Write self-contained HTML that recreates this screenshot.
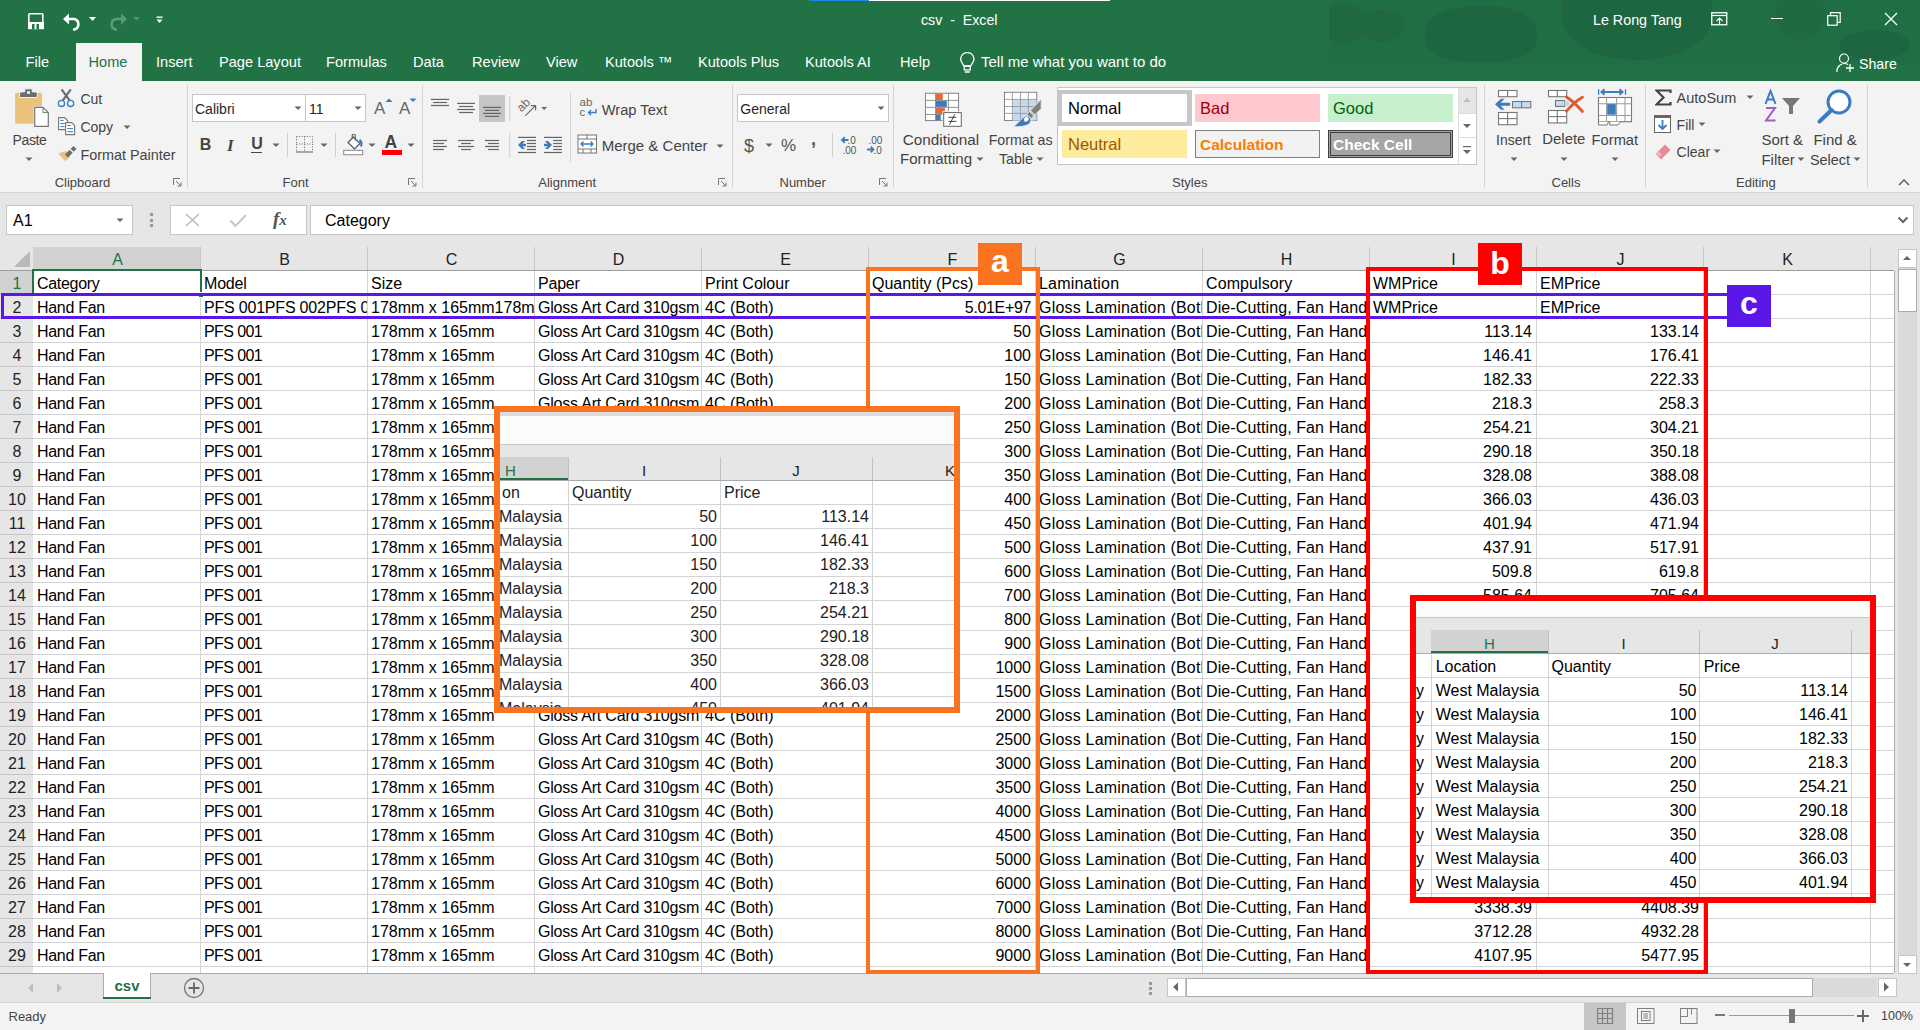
<!DOCTYPE html><html><head><meta charset="utf-8"><style>
html,body{margin:0;padding:0;width:1920px;height:1030px;overflow:hidden;background:#fff;font-family:'Liberation Sans', sans-serif;}
div,svg{box-sizing:border-box;}
.c{position:absolute;overflow:hidden;white-space:nowrap;font-size:16px;line-height:1;color:#000;}
</style></head><body>
<div style="position:absolute;left:0px;top:0px;width:1920px;height:81px;background:#217346;"></div>
<div style="position:absolute;left:1329px;top:0;width:591px;height:65px;overflow:hidden;background:#206f44;"><div style="position:absolute;left:-9px;top:3px;width:46px;height:40px;border-radius:50%;background:#1f6840;"></div><div style="position:absolute;left:28px;top:10px;width:48px;height:32px;border-radius:50%;background:#1f6840;"></div><div style="position:absolute;left:96px;top:6px;width:112px;height:56px;border-radius:45% 45% 40% 40%;background:#1e663f;"></div><div style="position:absolute;left:233px;top:-24px;width:150px;height:84px;border-radius:0 0 50% 50%;background:#1e663f;"></div><div style="position:absolute;left:446px;top:-10px;width:50px;height:50px;border-radius:50%;background:#1f6a41;"></div><div style="position:absolute;left:511px;top:30px;width:70px;height:30px;border-radius:50%;background:#1e663f;"></div></div>
<div style="position:absolute;left:809px;top:0px;width:60px;height:1px;background:#1e88e5;"></div>
<div style="position:absolute;left:869px;top:0px;width:241px;height:1px;background:#fff;"></div>
<svg style="position:absolute;left:27px;top:12px;" width="18" height="18" viewBox="0 0 18 18"><rect x="1.8" y="1.8" width="14" height="14.5" rx="1" fill="none" stroke="#fff" stroke-width="1.6"/><rect x="1" y="10" width="16" height="7.2" fill="#fff"/><rect x="5" y="12" width="7" height="5.2" fill="#217346"/><rect x="7.5" y="12" width="2" height="5.2" fill="#fff"/></svg>
<svg style="position:absolute;left:62px;top:12px;" width="22" height="19" viewBox="0 0 22 19"><path d="M3 7 H12.5 A5.5 5.5 0 0 1 12.5 17.5 H11" fill="none" stroke="#fff" stroke-width="2.6"/><path d="M1 7 L7 1.5 V12.5 Z" fill="#fff"/></svg>
<svg style="position:absolute;left:89px;top:17px;" width="8" height="5" viewBox="0 0 8 5"><path d="M0 0 H7 L3.5 4 Z" fill="#fff"/></svg>
<svg style="position:absolute;left:106px;top:12px;" width="22" height="19" viewBox="0 0 22 19"><path d="M19 7 H9.5 A5.5 5.5 0 0 0 9.5 17.5 H11" fill="none" stroke="#5e9c78" stroke-width="2.6"/><path d="M21 7 L15 1.5 V12.5 Z" fill="#5e9c78"/></svg>
<svg style="position:absolute;left:133px;top:17px;" width="8" height="5" viewBox="0 0 8 5"><path d="M0 0 H7 L3.5 4 Z" fill="#4f8f6a"/></svg>
<svg style="position:absolute;left:156px;top:16px;" width="8" height="8" viewBox="0 0 8 8"><rect x="0.5" y="0.5" width="6" height="1.4" fill="#fff"/><path d="M0.5 3.5 H6.5 L3.5 7 Z" fill="#fff"/></svg>
<div style="position:absolute;left:921px;top:13px;font-size:14.2px;line-height:1;color:#fff;font-weight:normal;white-space:nowrap;">csv &nbsp;-&nbsp; Excel</div>
<div style="position:absolute;left:1593px;top:13px;font-size:14.3px;line-height:1;color:#fff;font-weight:normal;white-space:nowrap;">Le Rong Tang</div>
<svg style="position:absolute;left:1711px;top:12px;" width="17" height="14" viewBox="0 0 17 14"><rect x="0.75" y="0.75" width="15" height="12" fill="none" stroke="#fff" stroke-width="1.3"/><line x1="1" y1="3.5" x2="16" y2="3.5" stroke="#fff" stroke-width="1.2"/><path d="M8.5 12 V6 M5.5 9 L8.5 6 L11.5 9" fill="none" stroke="#fff" stroke-width="1.2"/></svg>
<div style="position:absolute;left:1771px;top:18px;width:12px;height:1px;background:#fff;"></div>
<svg style="position:absolute;left:1827px;top:12px;" width="14" height="14" viewBox="0 0 14 14"><rect x="0.7" y="3.7" width="9.5" height="9.5" fill="none" stroke="#fff" stroke-width="1.2"/><path d="M3.5 3.5 V0.7 H13.2 V10.3 H10.3" fill="none" stroke="#fff" stroke-width="1.2"/></svg>
<svg style="position:absolute;left:1884px;top:12px;" width="14" height="14" viewBox="0 0 14 14"><path d="M1 1 L13 13 M13 1 L1 13" stroke="#fff" stroke-width="1.3"/></svg>
<div style="position:absolute;left:76px;top:43px;width:66px;height:38px;background:#f3f3f3;"></div>
<div style="position:absolute;left:25.6px;top:55px;font-size:14.6px;line-height:1;color:#fff;font-weight:normal;white-space:nowrap;">File</div>
<div style="position:absolute;left:88.5px;top:55px;font-size:14.6px;line-height:1;color:#217346;font-weight:normal;white-space:nowrap;">Home</div>
<div style="position:absolute;left:156px;top:55px;font-size:14.6px;line-height:1;color:#fff;font-weight:normal;white-space:nowrap;">Insert</div>
<div style="position:absolute;left:219px;top:55px;font-size:14.6px;line-height:1;color:#fff;font-weight:normal;white-space:nowrap;">Page Layout</div>
<div style="position:absolute;left:326px;top:55px;font-size:14.6px;line-height:1;color:#fff;font-weight:normal;white-space:nowrap;">Formulas</div>
<div style="position:absolute;left:413px;top:55px;font-size:14.6px;line-height:1;color:#fff;font-weight:normal;white-space:nowrap;">Data</div>
<div style="position:absolute;left:472px;top:55px;font-size:14.6px;line-height:1;color:#fff;font-weight:normal;white-space:nowrap;">Review</div>
<div style="position:absolute;left:546px;top:55px;font-size:14.6px;line-height:1;color:#fff;font-weight:normal;white-space:nowrap;">View</div>
<div style="position:absolute;left:605px;top:55px;font-size:14.6px;line-height:1;color:#fff;font-weight:normal;white-space:nowrap;">Kutools &trade;</div>
<div style="position:absolute;left:698px;top:55px;font-size:14.6px;line-height:1;color:#fff;font-weight:normal;white-space:nowrap;">Kutools Plus</div>
<div style="position:absolute;left:805px;top:55px;font-size:14.6px;line-height:1;color:#fff;font-weight:normal;white-space:nowrap;">Kutools AI</div>
<div style="position:absolute;left:900px;top:55px;font-size:14.6px;line-height:1;color:#fff;font-weight:normal;white-space:nowrap;">Help</div>
<svg style="position:absolute;left:959px;top:51px;" width="17" height="23" viewBox="0 0 17 23"><path d="M8.3 1.6 A6.5 6.5 0 0 1 13.4 12.2 L11.6 15 H5 L3.2 12.2 A6.5 6.5 0 0 1 8.3 1.6 Z" fill="none" stroke="#fff" stroke-width="1.3"/><rect x="5.3" y="15.3" width="6" height="3.6" fill="none" stroke="#fff" stroke-width="1.3"/><rect x="5.6" y="20.3" width="5.4" height="1.4" rx="0.7" fill="#fff"/></svg>
<div style="position:absolute;left:981px;top:54px;font-size:15px;line-height:1;color:#fff;font-weight:normal;white-space:nowrap;">Tell me what you want to do</div>
<svg style="position:absolute;left:1836px;top:53px;" width="20" height="20" viewBox="0 0 20 20"><circle cx="8" cy="5.5" r="4.5" fill="none" stroke="#fff" stroke-width="1.2"/><path d="M1 19 A7.5 7.5 0 0 1 12 11.5" fill="none" stroke="#fff" stroke-width="1.2"/><path d="M14 11 V19 M10 15 H18" stroke="#fff" stroke-width="1.3"/></svg>
<div style="position:absolute;left:1859px;top:57px;font-size:14.2px;line-height:1;color:#fff;font-weight:normal;white-space:nowrap;">Share</div>
<div style="position:absolute;left:0px;top:81px;width:1920px;height:111px;background:#f3f3f3;"></div>
<div style="position:absolute;left:0px;top:192px;width:1920px;height:1px;background:#d5d5d5;"></div>
<div style="position:absolute;left:187px;top:85px;width:1px;height:103px;background:#d4d4d4;"></div>
<div style="position:absolute;left:422px;top:85px;width:1px;height:103px;background:#d4d4d4;"></div>
<div style="position:absolute;left:732px;top:85px;width:1px;height:103px;background:#d4d4d4;"></div>
<div style="position:absolute;left:893px;top:85px;width:1px;height:103px;background:#d4d4d4;"></div>
<div style="position:absolute;left:1484px;top:85px;width:1px;height:103px;background:#d4d4d4;"></div>
<div style="position:absolute;left:1645px;top:85px;width:1px;height:103px;background:#d4d4d4;"></div>
<div style="position:absolute;left:1867px;top:85px;width:1px;height:103px;background:#d4d4d4;"></div>
<div style="position:absolute;left:54.7px;top:176px;font-size:13px;line-height:1;color:#444;font-weight:normal;white-space:nowrap;">Clipboard</div>
<div style="position:absolute;left:282.6px;top:176px;font-size:13px;line-height:1;color:#444;font-weight:normal;white-space:nowrap;">Font</div>
<div style="position:absolute;left:538.3px;top:176px;font-size:13px;line-height:1;color:#444;font-weight:normal;white-space:nowrap;">Alignment</div>
<div style="position:absolute;left:779.5px;top:176px;font-size:13px;line-height:1;color:#444;font-weight:normal;white-space:nowrap;">Number</div>
<div style="position:absolute;left:1172px;top:176px;font-size:13px;line-height:1;color:#444;font-weight:normal;white-space:nowrap;">Styles</div>
<div style="position:absolute;left:1551.5px;top:176px;font-size:13px;line-height:1;color:#444;font-weight:normal;white-space:nowrap;">Cells</div>
<div style="position:absolute;left:1736px;top:176px;font-size:13px;line-height:1;color:#444;font-weight:normal;white-space:nowrap;">Editing</div>
<svg style="position:absolute;left:173px;top:178px;" width="9" height="9" viewBox="0 0 9 9"><path d="M0.5 7 V0.5 H7" fill="none" stroke="#777" stroke-width="1"/><path d="M3 3 L8 8 M8 4.5 V8 H4.5" fill="none" stroke="#777" stroke-width="1"/></svg>
<svg style="position:absolute;left:408px;top:178px;" width="9" height="9" viewBox="0 0 9 9"><path d="M0.5 7 V0.5 H7" fill="none" stroke="#777" stroke-width="1"/><path d="M3 3 L8 8 M8 4.5 V8 H4.5" fill="none" stroke="#777" stroke-width="1"/></svg>
<svg style="position:absolute;left:718px;top:178px;" width="9" height="9" viewBox="0 0 9 9"><path d="M0.5 7 V0.5 H7" fill="none" stroke="#777" stroke-width="1"/><path d="M3 3 L8 8 M8 4.5 V8 H4.5" fill="none" stroke="#777" stroke-width="1"/></svg>
<svg style="position:absolute;left:879px;top:178px;" width="9" height="9" viewBox="0 0 9 9"><path d="M0.5 7 V0.5 H7" fill="none" stroke="#777" stroke-width="1"/><path d="M3 3 L8 8 M8 4.5 V8 H4.5" fill="none" stroke="#777" stroke-width="1"/></svg>
<svg style="position:absolute;left:1898px;top:178px;" width="12" height="8" viewBox="0 0 12 8"><path d="M1 7 L6 2 L11 7" fill="none" stroke="#555" stroke-width="1.4"/></svg>
<svg style="position:absolute;left:5px;top:85px;" width="80" height="80" viewBox="0 0 80 80"><rect x="10.1" y="7.8" width="26.8" height="31" rx="1.2" fill="#eac27b"/><path d="M14.6 12.5 V8.4 Q14.6 6.9 16.1 6.9 H19.7 V4.8 Q19.7 3.8 20.7 3.8 H26.3 Q27.3 3.8 27.3 4.8 V6.9 H30.8 Q32.3 6.9 32.3 8.4 V12.5 Z" fill="#6d6d6d" stroke="#f3f3f3" stroke-width="1"/><rect x="22.1" y="6.2" width="2.8" height="2.7" fill="#f3f3f3"/><path d="M28.6 21.2 H38.3 L44.4 27.3 V42.4 H28.6 Z" fill="#f3f3f3"/><path d="M29.7 22.3 H38 L43.3 27.6 V41.3 H29.7 Z" fill="#fff" stroke="#777" stroke-width="1.2"/><path d="M38 22.3 V27.6 H43.3" fill="none" stroke="#777" stroke-width="1"/><path d="M56.6 4.3 L64.8 15.6 M65.8 4.3 L57.6 15.6" stroke="#6d6d6d" stroke-width="2.2"/><circle cx="56.5" cy="18.4" r="3.1" fill="#f3f3f3" stroke="#3b7bc4" stroke-width="1.3"/><circle cx="65.6" cy="18.4" r="3.1" fill="#f3f3f3" stroke="#3b7bc4" stroke-width="1.3"/><path d="M53.6 32.6 H59.6 L62.6 35.6 V44.6 H53.6 Z" fill="#fff" stroke="#777" stroke-width="1.1"/><path d="M55.3 35.4 H58.6 M55.3 38.5 H59.8 M55.3 41.6 H59.8" stroke="#3b7bc4" stroke-width="1"/><path d="M60.6 37.6 H66.6 L69.6 40.6 V49.6 H60.6 Z" fill="#fff" stroke="#777" stroke-width="1.1"/><path d="M62.2 40.5 H65.6 M62.2 43.6 H68 M62.2 46.7 H68" stroke="#3b7bc4" stroke-width="1"/><path d="M53.4 68.5 L61.2 66 L65.4 71.4 L60.2 76.2 Z" fill="#eac27b"/><path d="M61.5 71 L66.2 66.2 M67.2 65.2 L70 62.4" stroke="#6d6d6d" stroke-width="4.2"/></svg>
<div style="position:absolute;left:12.6px;top:133px;font-size:14px;line-height:1;color:#444;font-weight:normal;white-space:nowrap;letter-spacing:-0.4px">Paste</div>
<svg style="position:absolute;left:25px;top:157px;" width="8" height="5" viewBox="0 0 8 5"><path d="M0.5 0.5 L7.5 0.5 L4 4.0 Z" fill="#666"/></svg>
<div style="position:absolute;left:80.4px;top:92px;font-size:14px;line-height:1;color:#444;font-weight:normal;white-space:nowrap;">Cut</div>
<div style="position:absolute;left:80.4px;top:120px;font-size:14px;line-height:1;color:#444;font-weight:normal;white-space:nowrap;">Copy</div>
<svg style="position:absolute;left:123px;top:125px;" width="8" height="5" viewBox="0 0 8 5"><path d="M0.5 0.5 L7.5 0.5 L4 4.0 Z" fill="#666"/></svg>
<div style="position:absolute;left:80.4px;top:148px;font-size:14.4px;line-height:1;color:#444;font-weight:normal;white-space:nowrap;">Format Painter</div>
<div style="position:absolute;left:192px;top:94px;width:114px;height:28px;background:#fff;border:1px solid #c6c6c6;"></div>
<div style="position:absolute;left:305px;top:94px;width:61px;height:28px;background:#fff;border:1px solid #c6c6c6;"></div>
<div style="position:absolute;left:195px;top:102px;font-size:14px;line-height:1;color:#262626;font-weight:normal;white-space:nowrap;">Calibri</div>
<div style="position:absolute;left:309px;top:102px;font-size:14px;line-height:1;color:#262626;font-weight:normal;white-space:nowrap;">11</div>
<svg style="position:absolute;left:294px;top:106px;" width="8" height="5" viewBox="0 0 8 5"><path d="M0.5 0.5 L7.5 0.5 L4 4.0 Z" fill="#666"/></svg>
<svg style="position:absolute;left:354px;top:106px;" width="8" height="5" viewBox="0 0 8 5"><path d="M0.5 0.5 L7.5 0.5 L4 4.0 Z" fill="#666"/></svg>
<div style="position:absolute;left:374px;top:100px;font-size:17px;line-height:1;color:#666;font-weight:normal;white-space:nowrap;">A</div>
<svg style="position:absolute;left:385px;top:98px;" width="8" height="5" viewBox="0 0 8 5"><path d="M0.5 4 L4 0.5 L7.5 4 Z" fill="#3b7bc4"/></svg>
<div style="position:absolute;left:399px;top:100px;font-size:17px;line-height:1;color:#666;font-weight:normal;white-space:nowrap;">A</div>
<svg style="position:absolute;left:409px;top:98px;" width="8" height="5" viewBox="0 0 8 5"><path d="M0.5 0.5 L7.5 0.5 L4 4 Z" fill="#3b7bc4"/></svg>
<div style="position:absolute;left:199.8px;top:137px;font-size:16px;line-height:1;color:#444;font-weight:normal;white-space:nowrap;"><b>B</b></div>
<div style="position:absolute;left:227px;top:137px;font-size:17px;line-height:1;color:#444;font-weight:normal;white-space:nowrap;font-family:'Liberation Serif'"><b><i>I</i></b></div>
<div style="position:absolute;left:251.3px;top:135.5px;font-size:16px;line-height:1;color:#444;font-weight:normal;white-space:nowrap;"><b>U</b></div>
<div style="position:absolute;left:251.3px;top:151.5px;width:10.5px;height:1.5px;background:#444;"></div>
<svg style="position:absolute;left:272px;top:143px;" width="8" height="5" viewBox="0 0 8 5"><path d="M0.5 0.5 L7.5 0.5 L4 4.0 Z" fill="#666"/></svg>
<div style="position:absolute;left:287px;top:133px;width:1px;height:24px;background:#d0d0d0;"></div>
<svg style="position:absolute;left:295px;top:135px;" width="19" height="19" viewBox="0 0 19 19"><path d="M1.5 1.5 H17.5 V16.5 M1.5 1.5 V16.5 M9.5 1.5 V16.5 M1.5 9 H17.5" fill="none" stroke="#666" stroke-width="1" stroke-dasharray="1 1.6"/><line x1="1" y1="17" x2="18" y2="17" stroke="#666" stroke-width="1.1"/></svg>
<svg style="position:absolute;left:320px;top:143px;" width="8" height="5" viewBox="0 0 8 5"><path d="M0.5 0.5 L7.5 0.5 L4 4.0 Z" fill="#666"/></svg>
<div style="position:absolute;left:335px;top:133px;width:1px;height:24px;background:#d0d0d0;"></div>
<svg style="position:absolute;left:342px;top:134px;" width="23" height="22" viewBox="0 0 23 22"><path d="M6 8.5 L11.5 3 L18 9.5 L12.5 15 Z" fill="#fff" stroke="#555" stroke-width="1.2"/><path d="M10.2 4.5 V1.5 A1.5 1.5 0 0 1 13.2 1.5 V6.5" fill="none" stroke="#555" stroke-width="1.1"/><path d="M17.5 6 Q20.5 8 19 12.5" fill="none" stroke="#3d7bbf" stroke-width="2.2"/><rect x="1.7" y="16.3" width="19" height="4.4" fill="#fff" stroke="#888" stroke-width="1"/></svg>
<svg style="position:absolute;left:368px;top:143px;" width="8" height="5" viewBox="0 0 8 5"><path d="M0.5 0.5 L7.5 0.5 L4 4.0 Z" fill="#666"/></svg>
<div style="position:absolute;left:384.5px;top:134px;font-size:17.5px;line-height:1;color:#444;font-weight:normal;white-space:nowrap;"><b>A</b></div>
<div style="position:absolute;left:382.2px;top:150px;width:19.6px;height:4.8px;background:#f00;"></div>
<svg style="position:absolute;left:407px;top:143px;" width="8" height="5" viewBox="0 0 8 5"><path d="M0.5 0.5 L7.5 0.5 L4 4.0 Z" fill="#666"/></svg>
<svg style="position:absolute;left:425px;top:90px;" width="145" height="70" viewBox="0 0 145 70"><rect x="6" y="8.8" width="18" height="1.2" fill="#666"/><rect x="8.2" y="11.9" width="13.7" height="1.2" fill="#666"/><rect x="6" y="14.9" width="18" height="1.2" fill="#666"/><rect x="32.1" y="12.8" width="17.9" height="1.2" fill="#666"/><rect x="34.1" y="15.9" width="13.899999999999999" height="1.2" fill="#666"/><rect x="32.1" y="18.9" width="17.9" height="1.2" fill="#666"/><rect x="34.1" y="21.9" width="13.899999999999999" height="1.2" fill="#666"/><rect x="54" y="5.1" width="26" height="26.8" fill="#c5c5c5"/><rect x="58" y="16.799999999999997" width="18" height="1.2" fill="#666"/><rect x="60" y="19.799999999999997" width="14" height="1.2" fill="#666"/><rect x="58" y="22.799999999999997" width="18" height="1.2" fill="#666"/><rect x="60" y="25.799999999999997" width="14" height="1.2" fill="#666"/><rect x="8.1" y="49.9" width="13.799999999999999" height="1.2" fill="#666"/><rect x="8.1" y="52.9" width="10.9" height="1.2" fill="#666"/><rect x="8.1" y="55.9" width="13.799999999999999" height="1.2" fill="#666"/><rect x="8.1" y="58.9" width="10.9" height="1.2" fill="#666"/><rect x="33" y="49.9" width="16.1" height="1.2" fill="#666"/><rect x="36.1" y="52.9" width="9.799999999999997" height="1.2" fill="#666"/><rect x="33" y="55.9" width="16.1" height="1.2" fill="#666"/><rect x="36.1" y="58.9" width="9.799999999999997" height="1.2" fill="#666"/><rect x="60" y="49.9" width="14" height="1.2" fill="#666"/><rect x="63" y="52.9" width="11" height="1.2" fill="#666"/><rect x="60" y="55.9" width="14" height="1.2" fill="#666"/><rect x="63" y="58.9" width="11" height="1.2" fill="#666"/><rect x="84.2" y="6" width="1" height="25" fill="#d0d0d0"/><rect x="84.2" y="43" width="1" height="25" fill="#d0d0d0"/><text x="0" y="0" font-size="12" fill="#666" font-family="Liberation Sans" transform="translate(96.5 22.5) rotate(-45)">ab</text><path d="M100.5 25.7 L110.3 15.9 M105.8 15.7 H110.6 V20.3" fill="none" stroke="#666" stroke-width="1.2"/><path d="M116.3 17 H122 L119.15 20 Z" fill="#666"/><rect x="93" y="46.8" width="18" height="1.2" fill="#666"/><rect x="102" y="49.9" width="9" height="1.2" fill="#666"/><rect x="102" y="52.9" width="9" height="1.2" fill="#666"/><rect x="102" y="55.9" width="9" height="1.2" fill="#666"/><rect x="102" y="58.9" width="9" height="1.2" fill="#666"/><rect x="93" y="61.9" width="18" height="1.2" fill="#666"/><path d="M93 55 L97 51 H100 L97.5 53.7 H101 V56.3 H97.5 L100 59 H97 Z" fill="#3d7bbf"/><rect x="119" y="46.8" width="17.900000000000006" height="1.2" fill="#666"/><rect x="128.2" y="49.9" width="8.700000000000017" height="1.2" fill="#666"/><rect x="128.2" y="52.9" width="8.700000000000017" height="1.2" fill="#666"/><rect x="128.2" y="55.9" width="8.700000000000017" height="1.2" fill="#666"/><rect x="128.2" y="58.9" width="8.700000000000017" height="1.2" fill="#666"/><rect x="119" y="61.9" width="17.900000000000006" height="1.2" fill="#666"/><path d="M127 55 L123 51 H120 L122.5 53.7 H119 V56.3 H122.5 L120 59 H123 Z" fill="#3d7bbf"/></svg>
<div style="position:absolute;left:570px;top:92px;width:1px;height:70px;background:#d4d4d4;"></div>
<svg style="position:absolute;left:579px;top:97px;" width="19" height="21" viewBox="0 0 19 21"><text x="0.5" y="9" font-size="11.5" fill="#666" font-family="Liberation Sans">ab</text><text x="0.5" y="19" font-size="11.5" fill="#666" font-family="Liberation Sans">c</text><path d="M17 12 V15.5 H9.5 M12 13 L9.5 15.5 L12 18" fill="none" stroke="#3b7bc4" stroke-width="1.4"/></svg>
<div style="position:absolute;left:601.7px;top:103px;font-size:14.7px;line-height:1;color:#444;font-weight:normal;white-space:nowrap;">Wrap Text</div>
<svg style="position:absolute;left:577px;top:134px;" width="21" height="20" viewBox="0 0 21 20"><rect x="1" y="1" width="18.5" height="18" fill="#fff" stroke="#777" stroke-width="1"/><path d="M1 5 H19.5 M1 15 H19.5 M10 1 V5 M6 15 V19 M14 15 V19" stroke="#777" stroke-width="1"/><path d="M4 10 H16 M6.5 7.5 L4 10 L6.5 12.5 M13.5 7.5 L16 10 L13.5 12.5" fill="none" stroke="#3b7bc4" stroke-width="1.3"/></svg>
<div style="position:absolute;left:601.7px;top:138px;font-size:15px;line-height:1;color:#444;font-weight:normal;white-space:nowrap;">Merge &amp; Center</div>
<svg style="position:absolute;left:716px;top:144px;" width="8" height="5" viewBox="0 0 8 5"><path d="M0.5 0.5 L7.5 0.5 L4 4.0 Z" fill="#666"/></svg>
<div style="position:absolute;left:737px;top:94px;width:152px;height:28px;background:#fff;border:1px solid #c6c6c6;"></div>
<div style="position:absolute;left:740.3px;top:102px;font-size:14px;line-height:1;color:#262626;font-weight:normal;white-space:nowrap;">General</div>
<svg style="position:absolute;left:877px;top:106px;" width="8" height="5" viewBox="0 0 8 5"><path d="M0.5 0.5 L7.5 0.5 L4 4.0 Z" fill="#666"/></svg>
<div style="position:absolute;left:744px;top:137px;font-size:18px;line-height:1;color:#555;font-weight:normal;white-space:nowrap;">$</div>
<svg style="position:absolute;left:765px;top:143px;" width="8" height="5" viewBox="0 0 8 5"><path d="M0.5 0.5 L7.5 0.5 L4 4.0 Z" fill="#666"/></svg>
<div style="position:absolute;left:781px;top:137px;font-size:17px;line-height:1;color:#555;font-weight:normal;white-space:nowrap;">%</div>
<div style="position:absolute;left:811px;top:130px;font-size:18px;line-height:1;color:#555;font-weight:normal;white-space:nowrap;"><b>,</b></div>
<div style="position:absolute;left:832px;top:133px;width:1px;height:24px;background:#d0d0d0;"></div>
<svg style="position:absolute;left:840px;top:135px;" width="20" height="20" viewBox="0 0 20 20"><text x="7.5" y="9" font-size="10" fill="#555" font-family="Liberation Sans">.0</text><text x="2.5" y="18.5" font-size="10" fill="#555" font-family="Liberation Sans">.00</text><path d="M8.5 5 H2 M4.8 2.2 L2 5 L4.8 7.8" fill="none" stroke="#3d7bbf" stroke-width="1.8"/></svg>
<svg style="position:absolute;left:866px;top:135px;" width="20" height="20" viewBox="0 0 20 20"><text x="2.5" y="9" font-size="10" fill="#555" font-family="Liberation Sans">.00</text><text x="7.5" y="18.5" font-size="10" fill="#555" font-family="Liberation Sans">.0</text><path d="M1 14.5 H7.5 M4.7 11.7 L7.5 14.5 L4.7 17.3" fill="none" stroke="#3d7bbf" stroke-width="1.8"/></svg>
<svg style="position:absolute;left:915px;top:86px;" width="135" height="44" viewBox="0 0 135 44"><rect x="10.4" y="7.2" width="33.2" height="27.4" fill="#fff" stroke="#777" stroke-width="0.9"/><rect x="21" y="7.7" width="6.8" height="6.4" fill="#e06a3a"/><rect x="21" y="14.9" width="10.8" height="6" fill="#3d7bbf"/><rect x="21" y="21.9" width="8.9" height="6.2" fill="#e06a3a"/><rect x="21" y="29" width="4.7" height="5.1" fill="#3d7bbf"/><path d="M10.4 14.4 H43.6 M10.4 21.4 H43.6 M10.4 28.5 H43.6 M20.5 7.2 V34.6 M33.4 7.2 V34.6" stroke="#888" stroke-width="0.9"/><rect x="27.3" y="25.2" width="20.3" height="16.4" fill="#f3f3f3"/><rect x="28.7" y="26.6" width="17.6" height="13.7" fill="#fff" stroke="#666" stroke-width="1"/><path d="M33.4 31.3 H41.4 M33.4 35.4 H41.4 M39.7 28.3 L34.5 38.7" stroke="#444" stroke-width="1"/><rect x="89.5" y="6.3" width="32.3" height="28.3" fill="#fff" stroke="#777" stroke-width="0.9"/><rect x="97.9" y="13.7" width="23.4" height="20.8" fill="#c5d9ef"/><path d="M97.4 6.3 V34.6 M105.5 6.3 V34.6 M113.4 6.3 V34.6 M89.5 13.4 H121.8 M89.5 20.5 H121.8 M89.5 27.4 H121.8" stroke="#999" stroke-width="0.9"/><path d="M126.2 13.2 V22.5 L119.8 28.9 L115.4 24.5 Z" fill="#808080" stroke="#f3f3f3" stroke-width="0.8"/><path d="M114.6 25.5 L118.9 29.8 L116 32.7 L111.7 28.4 Z" fill="#808080" stroke="#f3f3f3" stroke-width="0.8"/><path d="M98.8 40.7 Q104 35.5 108.2 31.5 Q111.8 28.4 114.8 31.2 Q117.5 34.5 113.8 38.3 Q108.5 41.2 98.8 40.7 Z" fill="#3d7bbf" stroke="#f3f3f3" stroke-width="0.8"/><ellipse cx="111.3" cy="33.3" rx="2.2" ry="2.6" transform="rotate(45 111.3 33.3)" fill="#fff"/></svg>
<div style="position:absolute;left:902.7px;top:132px;font-size:15.3px;line-height:1;color:#444;font-weight:normal;white-space:nowrap;">Conditional</div>
<div style="position:absolute;left:900px;top:151px;font-size:15.1px;line-height:1;color:#444;font-weight:normal;white-space:nowrap;">Formatting</div>
<svg style="position:absolute;left:976px;top:157px;" width="8" height="5" viewBox="0 0 8 5"><path d="M0.5 0.5 L7.5 0.5 L4 4.0 Z" fill="#666"/></svg>
<div style="position:absolute;left:988.7px;top:133px;font-size:14.2px;line-height:1;color:#444;font-weight:normal;white-space:nowrap;">Format as</div>
<div style="position:absolute;left:999px;top:152px;font-size:14.2px;line-height:1;color:#444;font-weight:normal;white-space:nowrap;">Table</div>
<svg style="position:absolute;left:1036px;top:157px;" width="8" height="5" viewBox="0 0 8 5"><path d="M0.5 0.5 L7.5 0.5 L4 4.0 Z" fill="#666"/></svg>
<div style="position:absolute;left:1057px;top:87px;width:420px;height:78px;background:#fff;border:1px solid #c6c6c6;"></div>
<div style="position:absolute;left:1458px;top:88px;width:1px;height:76px;background:#dcdcdc;"></div>
<div style="position:absolute;left:1459px;top:88px;width:17px;height:25px;background:#e6e6e6;"></div>
<div style="position:absolute;left:1459px;top:137px;width:17px;height:1px;background:#dcdcdc;"></div>
<div style="position:absolute;left:1459px;top:113px;width:17px;height:1px;background:#dcdcdc;"></div>
<svg style="position:absolute;left:1462px;top:97px;" width="10" height="6" viewBox="0 0 10 6"><path d="M1 5 L5 1 L9 5 Z" fill="#bdbdbd"/></svg>
<svg style="position:absolute;left:1462px;top:123px;" width="10" height="6" viewBox="0 0 10 6"><path d="M1 1 L9 1 L5 5 Z" fill="#666"/></svg>
<svg style="position:absolute;left:1462px;top:146px;" width="10" height="9" viewBox="0 0 10 9"><rect x="1" y="0" width="8" height="1.2" fill="#666"/><path d="M1 4 L9 4 L5 8 Z" fill="#666"/></svg>
<div style="position:absolute;left:1058px;top:90px;width:134px;height:36px;background:#c6c6c6;"></div>
<div style="position:absolute;left:1062px;top:94px;width:125px;height:28px;background:#fff;"></div>
<div style="position:absolute;left:1068px;top:100px;font-size:16.5px;line-height:1;color:#000;font-weight:normal;white-space:nowrap;">Normal</div>
<div style="position:absolute;left:1195px;top:94px;width:125px;height:28px;background:#ffc7ce;"></div>
<div style="position:absolute;left:1200px;top:100px;font-size:16.5px;line-height:1;color:#9c0006;font-weight:normal;white-space:nowrap;">Bad</div>
<div style="position:absolute;left:1328px;top:94px;width:125px;height:28px;background:#c6efce;"></div>
<div style="position:absolute;left:1333px;top:100px;font-size:16.5px;line-height:1;color:#006100;font-weight:normal;white-space:nowrap;">Good</div>
<div style="position:absolute;left:1062px;top:130px;width:125px;height:28px;background:#ffeb9c;"></div>
<div style="position:absolute;left:1068px;top:136px;font-size:16.5px;line-height:1;color:#9c5700;font-weight:normal;white-space:nowrap;">Neutral</div>
<div style="position:absolute;left:1195px;top:130px;width:125px;height:28px;background:#f2f2f2;border:1px solid #7f7f7f;"></div>
<div style="position:absolute;left:1200px;top:137px;font-size:15.5px;line-height:1;color:#fa7d00;font-weight:bold;white-space:nowrap;">Calculation</div>
<div style="position:absolute;left:1328px;top:130px;width:125px;height:28px;background:#a5a5a5;border:3px double #3f3f3f;"></div>
<div style="position:absolute;left:1333px;top:137px;font-size:15.5px;line-height:1;color:#fff;font-weight:bold;white-space:nowrap;">Check Cell</div>
<svg style="position:absolute;left:1490px;top:85px;" width="150" height="45" viewBox="0 0 150 45"><g fill="#fff" stroke="#777" stroke-width="1.1"><rect x="8.5" y="5.5" width="18.5" height="6.2"/><line x1="17.6" y1="5.5" x2="17.6" y2="11.7"/><rect x="8.5" y="27.5" width="18.5" height="12.2"/><line x1="17.6" y1="27.5" x2="17.6" y2="39.7"/><line x1="8.5" y1="33.6" x2="27" y2="33.6"/><rect x="22.5" y="16.5" width="18.3" height="6.3" fill="#c5d9ef"/><line x1="31.6" y1="16.5" x2="31.6" y2="22.8"/><rect x="58.5" y="5.5" width="18.2" height="6.2"/><line x1="67.3" y1="5.5" x2="67.3" y2="11.7"/><rect x="58.5" y="25.5" width="18.2" height="12.4"/><line x1="67.3" y1="25.5" x2="67.3" y2="37.9"/><line x1="58.5" y1="31.6" x2="76.7" y2="31.6"/><rect x="65.5" y="15.5" width="9.1" height="6" fill="#c5d9ef"/></g><path d="M74.6 15.5 H77 L80.5 18.5 L77 21.5 H74.6 Z" fill="#c5d9ef"/><path d="M5 19.2 L11 13.8 H14.5 L10.6 17.7 H20 V20.7 H10.6 L14.5 24.7 H11 Z" fill="#3d7bbf"/><path d="M76.5 12 Q84 17 92.5 26.5 M92.5 12.2 Q84 17 76.5 26.2" fill="none" stroke="#e0592a" stroke-width="2.8" stroke-linecap="round"/><path d="M108.6 4.3 V9.8 M135.5 4.3 V9.8" stroke="#3d7bbf" stroke-width="1.3"/><path d="M111.5 7 H132.5 M114.5 4.3 L111.5 7 L114.5 9.7 M129.5 4.3 L132.5 7 L129.5 9.7" fill="none" stroke="#3d7bbf" stroke-width="2"/><rect x="108.5" y="12.5" width="33" height="24.2" fill="#fff" stroke="#777" stroke-width="1.1"/><path d="M116.6 12.5 V36.7 M126.6 12.5 V36.7 M135 12.5 V36.7 M108.5 18.75 H141.5 M108.5 30.5 H141.5" stroke="#999" stroke-width="1"/><rect x="117.2" y="19.1" width="8.6" height="10.6" fill="#3d7bbf"/><path d="M108.5 36.7 V40 H117 L118.5 36.7 M119.8 36.7 V40 H128 L130.5 36.7" fill="#fff" stroke="#777" stroke-width="1"/></svg>
<div style="position:absolute;left:1496px;top:133px;font-size:14px;line-height:1;color:#444;font-weight:normal;white-space:nowrap;">Insert</div>
<svg style="position:absolute;left:1510px;top:157px;" width="8" height="5" viewBox="0 0 8 5"><path d="M0.5 0.5 L7.5 0.5 L4 4.0 Z" fill="#666"/></svg>
<div style="position:absolute;left:1542.3px;top:132px;font-size:14.9px;line-height:1;color:#444;font-weight:normal;white-space:nowrap;">Delete</div>
<svg style="position:absolute;left:1560px;top:157px;" width="8" height="5" viewBox="0 0 8 5"><path d="M0.5 0.5 L7.5 0.5 L4 4.0 Z" fill="#666"/></svg>
<div style="position:absolute;left:1591.6px;top:133px;font-size:14.7px;line-height:1;color:#444;font-weight:normal;white-space:nowrap;">Format</div>
<svg style="position:absolute;left:1611px;top:157px;" width="8" height="5" viewBox="0 0 8 5"><path d="M0.5 0.5 L7.5 0.5 L4 4.0 Z" fill="#666"/></svg>
<svg style="position:absolute;left:1655px;top:89px;" width="17" height="17" viewBox="0 0 17 17"><path d="M15.5 4 V1.5 H1.5 L8.5 8.5 L1.5 15.5 H15.5 V13" fill="none" stroke="#444" stroke-width="2.2"/></svg>
<div style="position:absolute;left:1676.6px;top:91px;font-size:14.5px;line-height:1;color:#444;font-weight:normal;white-space:nowrap;">AutoSum</div>
<svg style="position:absolute;left:1746px;top:95px;" width="8" height="5" viewBox="0 0 8 5"><path d="M0.5 0.5 L7.5 0.5 L4 4.0 Z" fill="#666"/></svg>
<svg style="position:absolute;left:1654px;top:115px;" width="18" height="19" viewBox="0 0 18 19"><rect x="0.5" y="0.5" width="16" height="17" fill="#fff" stroke="#666" stroke-width="1"/><rect x="0.5" y="0.5" width="16" height="2.5" fill="#666"/><path d="M8.5 5 V14 M4.5 10 L8.5 14 L12.5 10" fill="none" stroke="#3b7bc4" stroke-width="1.8"/></svg>
<div style="position:absolute;left:1676.6px;top:118px;font-size:14px;line-height:1;color:#444;font-weight:normal;white-space:nowrap;">Fill</div>
<svg style="position:absolute;left:1698px;top:122px;" width="8" height="5" viewBox="0 0 8 5"><path d="M0.5 0.5 L7.5 0.5 L4 4.0 Z" fill="#666"/></svg>
<svg style="position:absolute;left:1654px;top:142px;" width="18" height="18" viewBox="0 0 18 18"><path d="M1.5 12 L11 2.5 L16.5 8 L7 17.5 Z" fill="#e8899a"/><path d="M5 15.5 L1.5 12 L4.5 9 L8 12.5 Z" fill="#f0b0bc"/></svg>
<div style="position:absolute;left:1676.6px;top:145px;font-size:14px;line-height:1;color:#444;font-weight:normal;white-space:nowrap;">Clear</div>
<svg style="position:absolute;left:1713px;top:149px;" width="8" height="5" viewBox="0 0 8 5"><path d="M0.5 0.5 L7.5 0.5 L4 4.0 Z" fill="#666"/></svg>
<svg style="position:absolute;left:1763px;top:89px;" width="40" height="34" viewBox="0 0 40 34"><path d="M2.5 15 L7.5 2 L12.5 15 M4.3 10.5 H10.7" fill="none" stroke="#3b7bc4" stroke-width="2"/><path d="M3 19 H12 L3 31.5 H12.5" fill="none" stroke="#a05cc4" stroke-width="2"/><path d="M19 9 H37 L30 17 V25 H26 V17 Z" fill="#777"/></svg>
<div style="position:absolute;left:1761.4px;top:132px;font-size:15px;line-height:1;color:#444;font-weight:normal;white-space:nowrap;">Sort &amp;</div>
<div style="position:absolute;left:1761.4px;top:152px;font-size:15px;line-height:1;color:#444;font-weight:normal;white-space:nowrap;">Filter</div>
<svg style="position:absolute;left:1797px;top:157px;" width="8" height="5" viewBox="0 0 8 5"><path d="M0.5 0.5 L7.5 0.5 L4 4.0 Z" fill="#666"/></svg>
<svg style="position:absolute;left:1816px;top:88px;" width="38" height="37" viewBox="0 0 38 37"><circle cx="23" cy="14" r="11" fill="#fff" stroke="#3b7bc4" stroke-width="3"/><path d="M15.5 22 L3.5 33.5" stroke="#3b7bc4" stroke-width="4" stroke-linecap="round"/></svg>
<div style="position:absolute;left:1813.4px;top:132px;font-size:15px;line-height:1;color:#444;font-weight:normal;white-space:nowrap;">Find &amp;</div>
<div style="position:absolute;left:1810px;top:153px;font-size:14.4px;line-height:1;color:#444;font-weight:normal;white-space:nowrap;">Select</div>
<svg style="position:absolute;left:1853px;top:157px;" width="8" height="5" viewBox="0 0 8 5"><path d="M0.5 0.5 L7.5 0.5 L4 4.0 Z" fill="#666"/></svg>
<div style="position:absolute;left:0px;top:193px;width:1920px;height:78px;background:#e6e6e6;"></div>
<div style="position:absolute;left:6px;top:205px;width:127px;height:30px;background:#fff;border:1px solid #c6c6c6;"></div>
<div style="position:absolute;left:13px;top:213px;font-size:16px;line-height:1;color:#000;font-weight:normal;white-space:nowrap;">A1</div>
<svg style="position:absolute;left:116px;top:218px;" width="8" height="5" viewBox="0 0 8 5"><path d="M0.5 0.5 L7.5 0.5 L4 4.0 Z" fill="#666"/></svg>
<div style="position:absolute;left:150px;top:213px;width:3px;height:3px;background:#999;"></div>
<div style="position:absolute;left:150px;top:218.5px;width:3px;height:3px;background:#999;"></div>
<div style="position:absolute;left:150px;top:224px;width:3px;height:3px;background:#999;"></div>
<div style="position:absolute;left:170px;top:205px;width:137px;height:30px;background:#fff;border:1px solid #c6c6c6;"></div>
<svg style="position:absolute;left:184px;top:212px;" width="17" height="16" viewBox="0 0 17 16"><path d="M2 2 L15 14 M15 2 L2 14" stroke="#bdbdbd" stroke-width="1.6"/></svg>
<svg style="position:absolute;left:229px;top:213px;" width="19" height="15" viewBox="0 0 19 15"><path d="M1.5 7.5 L6.5 13 L17 2" fill="none" stroke="#c8c8c8" stroke-width="2"/></svg>
<div style="position:absolute;left:273px;top:209px;font-size:19px;line-height:1;color:#555;font-weight:normal;white-space:nowrap;font-family:'Liberation Serif'"><b><i>f</i><i style="font-size:15px">x</i></b></div>
<div style="position:absolute;left:310px;top:205px;width:1604px;height:30px;background:#fff;border:1px solid #c6c6c6;"></div>
<div style="position:absolute;left:325px;top:213px;font-size:16px;line-height:1;color:#000;font-weight:normal;white-space:nowrap;">Category</div>
<svg style="position:absolute;left:1897px;top:216px;" width="12" height="8" viewBox="0 0 12 8"><path d="M1.5 1.5 L6 6 L10.5 1.5" fill="none" stroke="#666" stroke-width="2"/></svg>
<div style="position:absolute;left:0px;top:247px;width:1894px;height:23px;background:#e6e6e6;"></div>
<div style="position:absolute;left:0px;top:270px;width:1894px;height:1px;background:#9e9e9e;"></div>
<svg style="position:absolute;left:14px;top:251px;" width="17" height="16" viewBox="0 0 17 16"><path d="M16 0 V16 H0 Z" fill="#b9b9b9"/></svg>
<div style="position:absolute;left:33px;top:247px;width:167px;height:23px;background:#d2d2d2;"></div>
<div style="position:absolute;left:-182.5px;width:600px;text-align:center;top:252px;font-size:16px;line-height:1;color:#217346;font-weight:normal;white-space:nowrap;">A</div>
<div style="position:absolute;left:200px;top:247px;width:1px;height:23px;background:#c6c6c6;"></div>
<div style="position:absolute;left:-15.5px;width:600px;text-align:center;top:252px;font-size:16px;line-height:1;color:#222;font-weight:normal;white-space:nowrap;">B</div>
<div style="position:absolute;left:367px;top:247px;width:1px;height:23px;background:#c6c6c6;"></div>
<div style="position:absolute;left:151.5px;width:600px;text-align:center;top:252px;font-size:16px;line-height:1;color:#222;font-weight:normal;white-space:nowrap;">C</div>
<div style="position:absolute;left:534px;top:247px;width:1px;height:23px;background:#c6c6c6;"></div>
<div style="position:absolute;left:318.5px;width:600px;text-align:center;top:252px;font-size:16px;line-height:1;color:#222;font-weight:normal;white-space:nowrap;">D</div>
<div style="position:absolute;left:701px;top:247px;width:1px;height:23px;background:#c6c6c6;"></div>
<div style="position:absolute;left:485.5px;width:600px;text-align:center;top:252px;font-size:16px;line-height:1;color:#222;font-weight:normal;white-space:nowrap;">E</div>
<div style="position:absolute;left:868px;top:247px;width:1px;height:23px;background:#c6c6c6;"></div>
<div style="position:absolute;left:652.5px;width:600px;text-align:center;top:252px;font-size:16px;line-height:1;color:#222;font-weight:normal;white-space:nowrap;">F</div>
<div style="position:absolute;left:1035px;top:247px;width:1px;height:23px;background:#c6c6c6;"></div>
<div style="position:absolute;left:819.5px;width:600px;text-align:center;top:252px;font-size:16px;line-height:1;color:#222;font-weight:normal;white-space:nowrap;">G</div>
<div style="position:absolute;left:1202px;top:247px;width:1px;height:23px;background:#c6c6c6;"></div>
<div style="position:absolute;left:986.5px;width:600px;text-align:center;top:252px;font-size:16px;line-height:1;color:#222;font-weight:normal;white-space:nowrap;">H</div>
<div style="position:absolute;left:1369px;top:247px;width:1px;height:23px;background:#c6c6c6;"></div>
<div style="position:absolute;left:1153.5px;width:600px;text-align:center;top:252px;font-size:16px;line-height:1;color:#222;font-weight:normal;white-space:nowrap;">I</div>
<div style="position:absolute;left:1536px;top:247px;width:1px;height:23px;background:#c6c6c6;"></div>
<div style="position:absolute;left:1320.5px;width:600px;text-align:center;top:252px;font-size:16px;line-height:1;color:#222;font-weight:normal;white-space:nowrap;">J</div>
<div style="position:absolute;left:1703px;top:247px;width:1px;height:23px;background:#c6c6c6;"></div>
<div style="position:absolute;left:1487.5px;width:600px;text-align:center;top:252px;font-size:16px;line-height:1;color:#222;font-weight:normal;white-space:nowrap;">K</div>
<div style="position:absolute;left:1870px;top:247px;width:1px;height:23px;background:#c6c6c6;"></div>
<div style="position:absolute;left:1654.5px;width:600px;text-align:center;top:252px;font-size:16px;line-height:1;color:#222;font-weight:normal;white-space:nowrap;">L</div>
<div style="position:absolute;left:0px;top:271px;width:33px;height:702px;background:#e6e6e6;"></div>
<div style="position:absolute;left:33px;top:271px;width:1px;height:702px;background:#ababab;"></div>
<div style="position:absolute;left:0px;top:271px;width:33px;height:23px;background:#d2d2d2;"></div>
<div style="position:absolute;left:33px;top:271px;width:1861px;height:702px;background-color:#fff;background-image:repeating-linear-gradient(to bottom, transparent 0 23px, #d4d4d4 23px 24px),repeating-linear-gradient(to right, transparent 0 166px, #d4d4d4 166px 167px);background-position:0 0, 1px 0;"></div>
<div style="position:absolute;left:-283px;width:600px;text-align:center;top:276px;font-size:16px;line-height:1;color:#217346;font-weight:normal;white-space:nowrap;">1</div>
<div style="position:absolute;left:0px;top:294px;width:33px;height:1px;background:#c6c6c6;"></div>
<div style="position:absolute;left:-283px;width:600px;text-align:center;top:300px;font-size:16px;line-height:1;color:#222;font-weight:normal;white-space:nowrap;">2</div>
<div style="position:absolute;left:0px;top:318px;width:33px;height:1px;background:#c6c6c6;"></div>
<div style="position:absolute;left:-283px;width:600px;text-align:center;top:324px;font-size:16px;line-height:1;color:#222;font-weight:normal;white-space:nowrap;">3</div>
<div style="position:absolute;left:0px;top:342px;width:33px;height:1px;background:#c6c6c6;"></div>
<div style="position:absolute;left:-283px;width:600px;text-align:center;top:348px;font-size:16px;line-height:1;color:#222;font-weight:normal;white-space:nowrap;">4</div>
<div style="position:absolute;left:0px;top:366px;width:33px;height:1px;background:#c6c6c6;"></div>
<div style="position:absolute;left:-283px;width:600px;text-align:center;top:372px;font-size:16px;line-height:1;color:#222;font-weight:normal;white-space:nowrap;">5</div>
<div style="position:absolute;left:0px;top:390px;width:33px;height:1px;background:#c6c6c6;"></div>
<div style="position:absolute;left:-283px;width:600px;text-align:center;top:396px;font-size:16px;line-height:1;color:#222;font-weight:normal;white-space:nowrap;">6</div>
<div style="position:absolute;left:0px;top:414px;width:33px;height:1px;background:#c6c6c6;"></div>
<div style="position:absolute;left:-283px;width:600px;text-align:center;top:420px;font-size:16px;line-height:1;color:#222;font-weight:normal;white-space:nowrap;">7</div>
<div style="position:absolute;left:0px;top:438px;width:33px;height:1px;background:#c6c6c6;"></div>
<div style="position:absolute;left:-283px;width:600px;text-align:center;top:444px;font-size:16px;line-height:1;color:#222;font-weight:normal;white-space:nowrap;">8</div>
<div style="position:absolute;left:0px;top:462px;width:33px;height:1px;background:#c6c6c6;"></div>
<div style="position:absolute;left:-283px;width:600px;text-align:center;top:468px;font-size:16px;line-height:1;color:#222;font-weight:normal;white-space:nowrap;">9</div>
<div style="position:absolute;left:0px;top:486px;width:33px;height:1px;background:#c6c6c6;"></div>
<div style="position:absolute;left:-283px;width:600px;text-align:center;top:492px;font-size:16px;line-height:1;color:#222;font-weight:normal;white-space:nowrap;">10</div>
<div style="position:absolute;left:0px;top:510px;width:33px;height:1px;background:#c6c6c6;"></div>
<div style="position:absolute;left:-283px;width:600px;text-align:center;top:516px;font-size:16px;line-height:1;color:#222;font-weight:normal;white-space:nowrap;">11</div>
<div style="position:absolute;left:0px;top:534px;width:33px;height:1px;background:#c6c6c6;"></div>
<div style="position:absolute;left:-283px;width:600px;text-align:center;top:540px;font-size:16px;line-height:1;color:#222;font-weight:normal;white-space:nowrap;">12</div>
<div style="position:absolute;left:0px;top:558px;width:33px;height:1px;background:#c6c6c6;"></div>
<div style="position:absolute;left:-283px;width:600px;text-align:center;top:564px;font-size:16px;line-height:1;color:#222;font-weight:normal;white-space:nowrap;">13</div>
<div style="position:absolute;left:0px;top:582px;width:33px;height:1px;background:#c6c6c6;"></div>
<div style="position:absolute;left:-283px;width:600px;text-align:center;top:588px;font-size:16px;line-height:1;color:#222;font-weight:normal;white-space:nowrap;">14</div>
<div style="position:absolute;left:0px;top:606px;width:33px;height:1px;background:#c6c6c6;"></div>
<div style="position:absolute;left:-283px;width:600px;text-align:center;top:612px;font-size:16px;line-height:1;color:#222;font-weight:normal;white-space:nowrap;">15</div>
<div style="position:absolute;left:0px;top:630px;width:33px;height:1px;background:#c6c6c6;"></div>
<div style="position:absolute;left:-283px;width:600px;text-align:center;top:636px;font-size:16px;line-height:1;color:#222;font-weight:normal;white-space:nowrap;">16</div>
<div style="position:absolute;left:0px;top:654px;width:33px;height:1px;background:#c6c6c6;"></div>
<div style="position:absolute;left:-283px;width:600px;text-align:center;top:660px;font-size:16px;line-height:1;color:#222;font-weight:normal;white-space:nowrap;">17</div>
<div style="position:absolute;left:0px;top:678px;width:33px;height:1px;background:#c6c6c6;"></div>
<div style="position:absolute;left:-283px;width:600px;text-align:center;top:684px;font-size:16px;line-height:1;color:#222;font-weight:normal;white-space:nowrap;">18</div>
<div style="position:absolute;left:0px;top:702px;width:33px;height:1px;background:#c6c6c6;"></div>
<div style="position:absolute;left:-283px;width:600px;text-align:center;top:708px;font-size:16px;line-height:1;color:#222;font-weight:normal;white-space:nowrap;">19</div>
<div style="position:absolute;left:0px;top:726px;width:33px;height:1px;background:#c6c6c6;"></div>
<div style="position:absolute;left:-283px;width:600px;text-align:center;top:732px;font-size:16px;line-height:1;color:#222;font-weight:normal;white-space:nowrap;">20</div>
<div style="position:absolute;left:0px;top:750px;width:33px;height:1px;background:#c6c6c6;"></div>
<div style="position:absolute;left:-283px;width:600px;text-align:center;top:756px;font-size:16px;line-height:1;color:#222;font-weight:normal;white-space:nowrap;">21</div>
<div style="position:absolute;left:0px;top:774px;width:33px;height:1px;background:#c6c6c6;"></div>
<div style="position:absolute;left:-283px;width:600px;text-align:center;top:780px;font-size:16px;line-height:1;color:#222;font-weight:normal;white-space:nowrap;">22</div>
<div style="position:absolute;left:0px;top:798px;width:33px;height:1px;background:#c6c6c6;"></div>
<div style="position:absolute;left:-283px;width:600px;text-align:center;top:804px;font-size:16px;line-height:1;color:#222;font-weight:normal;white-space:nowrap;">23</div>
<div style="position:absolute;left:0px;top:822px;width:33px;height:1px;background:#c6c6c6;"></div>
<div style="position:absolute;left:-283px;width:600px;text-align:center;top:828px;font-size:16px;line-height:1;color:#222;font-weight:normal;white-space:nowrap;">24</div>
<div style="position:absolute;left:0px;top:846px;width:33px;height:1px;background:#c6c6c6;"></div>
<div style="position:absolute;left:-283px;width:600px;text-align:center;top:852px;font-size:16px;line-height:1;color:#222;font-weight:normal;white-space:nowrap;">25</div>
<div style="position:absolute;left:0px;top:870px;width:33px;height:1px;background:#c6c6c6;"></div>
<div style="position:absolute;left:-283px;width:600px;text-align:center;top:876px;font-size:16px;line-height:1;color:#222;font-weight:normal;white-space:nowrap;">26</div>
<div style="position:absolute;left:0px;top:894px;width:33px;height:1px;background:#c6c6c6;"></div>
<div style="position:absolute;left:-283px;width:600px;text-align:center;top:900px;font-size:16px;line-height:1;color:#222;font-weight:normal;white-space:nowrap;">27</div>
<div style="position:absolute;left:0px;top:918px;width:33px;height:1px;background:#c6c6c6;"></div>
<div style="position:absolute;left:-283px;width:600px;text-align:center;top:924px;font-size:16px;line-height:1;color:#222;font-weight:normal;white-space:nowrap;">28</div>
<div style="position:absolute;left:0px;top:942px;width:33px;height:1px;background:#c6c6c6;"></div>
<div style="position:absolute;left:-283px;width:600px;text-align:center;top:948px;font-size:16px;line-height:1;color:#222;font-weight:normal;white-space:nowrap;">29</div>
<div style="position:absolute;left:0px;top:966px;width:33px;height:1px;background:#c6c6c6;"></div>
<div style="position:absolute;left:0px;top:973px;width:1894px;height:1px;background:#ababab;"></div>
<div style="position:absolute;left:1894px;top:271px;width:1px;height:702px;background:#ababab;"></div>
<div class="c" style="left:34px;top:271px;width:166px;height:23px;padding:5px 0 0 3px;letter-spacing:-0.3px;">Category</div>
<div class="c" style="left:201px;top:271px;width:166px;height:23px;padding:5px 0 0 3px;letter-spacing:-0.2px;">Model</div>
<div class="c" style="left:368px;top:271px;width:166px;height:23px;padding:5px 0 0 3px;letter-spacing:0px;">Size</div>
<div class="c" style="left:535px;top:271px;width:166px;height:23px;padding:5px 0 0 3px;letter-spacing:-0.2px;">Paper</div>
<div class="c" style="left:702px;top:271px;width:166px;height:23px;padding:5px 0 0 3px;letter-spacing:0px;">Print Colour</div>
<div class="c" style="left:869px;top:271px;width:166px;height:23px;padding:5px 0 0 3px;letter-spacing:0px;">Quantity (Pcs)</div>
<div class="c" style="left:1036px;top:271px;width:166px;height:23px;padding:5px 0 0 3px;letter-spacing:0.2px;">Lamination</div>
<div class="c" style="left:1203px;top:271px;width:166px;height:23px;padding:5px 0 0 3px;letter-spacing:0.1px;">Compulsory</div>
<div class="c" style="left:1370px;top:271px;width:166px;height:23px;padding:5px 0 0 3px;letter-spacing:0px;">WMPrice</div>
<div class="c" style="left:1537px;top:271px;width:166px;height:23px;padding:5px 0 0 3px;letter-spacing:0px;">EMPrice</div>
<div class="c" style="left:34px;top:295px;width:166px;height:23px;padding:5px 0 0 3px;letter-spacing:-0.3px;">Hand Fan</div>
<div class="c" style="left:201px;top:295px;width:166px;height:23px;padding:5px 0 0 3px;letter-spacing:-0.2px;">PFS 001PFS 002PFS 003PFS 004</div>
<div class="c" style="left:368px;top:295px;width:166px;height:23px;padding:5px 0 0 3px;letter-spacing:0px;">178mm x 165mm178mm x 165mm</div>
<div class="c" style="left:535px;top:295px;width:166px;height:23px;padding:5px 0 0 3px;letter-spacing:-0.2px;">Gloss Art Card 310gsm</div>
<div class="c" style="left:702px;top:295px;width:166px;height:23px;padding:5px 0 0 3px;letter-spacing:0px;">4C (Both)</div>
<div class="c" style="left:1036px;top:295px;width:166px;height:23px;padding:5px 0 0 3px;letter-spacing:0.2px;">Gloss Lamination (Both)</div>
<div class="c" style="left:1203px;top:295px;width:166px;height:23px;padding:5px 0 0 3px;letter-spacing:0.1px;">Die-Cutting, Fan Handle</div>
<div class="c" style="left:1370px;top:295px;width:166px;height:23px;padding:5px 0 0 3px;letter-spacing:0px;">WMPrice</div>
<div class="c" style="left:1537px;top:295px;width:166px;height:23px;padding:5px 0 0 3px;letter-spacing:0px;">EMPrice</div>
<div class="c" style="left:869px;top:295px;width:166px;height:23px;padding:5px 4px 0 0;text-align:right;letter-spacing:0px;"><span style="letter-spacing:-0.35px">5.01E+97</span></div>
<div class="c" style="left:34px;top:319px;width:166px;height:23px;padding:5px 0 0 3px;letter-spacing:-0.3px;">Hand Fan</div>
<div class="c" style="left:201px;top:319px;width:166px;height:23px;padding:5px 0 0 3px;letter-spacing:-0.2px;"><span style="letter-spacing:-0.6px">PFS 001</span></div>
<div class="c" style="left:368px;top:319px;width:166px;height:23px;padding:5px 0 0 3px;letter-spacing:0px;">178mm x 165mm</div>
<div class="c" style="left:535px;top:319px;width:166px;height:23px;padding:5px 0 0 3px;letter-spacing:-0.2px;">Gloss Art Card 310gsm</div>
<div class="c" style="left:702px;top:319px;width:166px;height:23px;padding:5px 0 0 3px;letter-spacing:0px;">4C (Both)</div>
<div class="c" style="left:869px;top:319px;width:166px;height:23px;padding:5px 4px 0 0;text-align:right;letter-spacing:0px;">50</div>
<div class="c" style="left:1036px;top:319px;width:166px;height:23px;padding:5px 0 0 3px;letter-spacing:0.2px;">Gloss Lamination (Both)</div>
<div class="c" style="left:1203px;top:319px;width:166px;height:23px;padding:5px 0 0 3px;letter-spacing:0.1px;">Die-Cutting, Fan Handle</div>
<div class="c" style="left:1370px;top:319px;width:166px;height:23px;padding:5px 4px 0 0;text-align:right;letter-spacing:0px;">113.14</div>
<div class="c" style="left:1537px;top:319px;width:166px;height:23px;padding:5px 4px 0 0;text-align:right;letter-spacing:0px;">133.14</div>
<div class="c" style="left:34px;top:343px;width:166px;height:23px;padding:5px 0 0 3px;letter-spacing:-0.3px;">Hand Fan</div>
<div class="c" style="left:201px;top:343px;width:166px;height:23px;padding:5px 0 0 3px;letter-spacing:-0.2px;"><span style="letter-spacing:-0.6px">PFS 001</span></div>
<div class="c" style="left:368px;top:343px;width:166px;height:23px;padding:5px 0 0 3px;letter-spacing:0px;">178mm x 165mm</div>
<div class="c" style="left:535px;top:343px;width:166px;height:23px;padding:5px 0 0 3px;letter-spacing:-0.2px;">Gloss Art Card 310gsm</div>
<div class="c" style="left:702px;top:343px;width:166px;height:23px;padding:5px 0 0 3px;letter-spacing:0px;">4C (Both)</div>
<div class="c" style="left:869px;top:343px;width:166px;height:23px;padding:5px 4px 0 0;text-align:right;letter-spacing:0px;">100</div>
<div class="c" style="left:1036px;top:343px;width:166px;height:23px;padding:5px 0 0 3px;letter-spacing:0.2px;">Gloss Lamination (Both)</div>
<div class="c" style="left:1203px;top:343px;width:166px;height:23px;padding:5px 0 0 3px;letter-spacing:0.1px;">Die-Cutting, Fan Handle</div>
<div class="c" style="left:1370px;top:343px;width:166px;height:23px;padding:5px 4px 0 0;text-align:right;letter-spacing:0px;">146.41</div>
<div class="c" style="left:1537px;top:343px;width:166px;height:23px;padding:5px 4px 0 0;text-align:right;letter-spacing:0px;">176.41</div>
<div class="c" style="left:34px;top:367px;width:166px;height:23px;padding:5px 0 0 3px;letter-spacing:-0.3px;">Hand Fan</div>
<div class="c" style="left:201px;top:367px;width:166px;height:23px;padding:5px 0 0 3px;letter-spacing:-0.2px;"><span style="letter-spacing:-0.6px">PFS 001</span></div>
<div class="c" style="left:368px;top:367px;width:166px;height:23px;padding:5px 0 0 3px;letter-spacing:0px;">178mm x 165mm</div>
<div class="c" style="left:535px;top:367px;width:166px;height:23px;padding:5px 0 0 3px;letter-spacing:-0.2px;">Gloss Art Card 310gsm</div>
<div class="c" style="left:702px;top:367px;width:166px;height:23px;padding:5px 0 0 3px;letter-spacing:0px;">4C (Both)</div>
<div class="c" style="left:869px;top:367px;width:166px;height:23px;padding:5px 4px 0 0;text-align:right;letter-spacing:0px;">150</div>
<div class="c" style="left:1036px;top:367px;width:166px;height:23px;padding:5px 0 0 3px;letter-spacing:0.2px;">Gloss Lamination (Both)</div>
<div class="c" style="left:1203px;top:367px;width:166px;height:23px;padding:5px 0 0 3px;letter-spacing:0.1px;">Die-Cutting, Fan Handle</div>
<div class="c" style="left:1370px;top:367px;width:166px;height:23px;padding:5px 4px 0 0;text-align:right;letter-spacing:0px;">182.33</div>
<div class="c" style="left:1537px;top:367px;width:166px;height:23px;padding:5px 4px 0 0;text-align:right;letter-spacing:0px;">222.33</div>
<div class="c" style="left:34px;top:391px;width:166px;height:23px;padding:5px 0 0 3px;letter-spacing:-0.3px;">Hand Fan</div>
<div class="c" style="left:201px;top:391px;width:166px;height:23px;padding:5px 0 0 3px;letter-spacing:-0.2px;"><span style="letter-spacing:-0.6px">PFS 001</span></div>
<div class="c" style="left:368px;top:391px;width:166px;height:23px;padding:5px 0 0 3px;letter-spacing:0px;">178mm x 165mm</div>
<div class="c" style="left:535px;top:391px;width:166px;height:23px;padding:5px 0 0 3px;letter-spacing:-0.2px;">Gloss Art Card 310gsm</div>
<div class="c" style="left:702px;top:391px;width:166px;height:23px;padding:5px 0 0 3px;letter-spacing:0px;">4C (Both)</div>
<div class="c" style="left:869px;top:391px;width:166px;height:23px;padding:5px 4px 0 0;text-align:right;letter-spacing:0px;">200</div>
<div class="c" style="left:1036px;top:391px;width:166px;height:23px;padding:5px 0 0 3px;letter-spacing:0.2px;">Gloss Lamination (Both)</div>
<div class="c" style="left:1203px;top:391px;width:166px;height:23px;padding:5px 0 0 3px;letter-spacing:0.1px;">Die-Cutting, Fan Handle</div>
<div class="c" style="left:1370px;top:391px;width:166px;height:23px;padding:5px 4px 0 0;text-align:right;letter-spacing:0px;">218.3</div>
<div class="c" style="left:1537px;top:391px;width:166px;height:23px;padding:5px 4px 0 0;text-align:right;letter-spacing:0px;">258.3</div>
<div class="c" style="left:34px;top:415px;width:166px;height:23px;padding:5px 0 0 3px;letter-spacing:-0.3px;">Hand Fan</div>
<div class="c" style="left:201px;top:415px;width:166px;height:23px;padding:5px 0 0 3px;letter-spacing:-0.2px;"><span style="letter-spacing:-0.6px">PFS 001</span></div>
<div class="c" style="left:368px;top:415px;width:166px;height:23px;padding:5px 0 0 3px;letter-spacing:0px;">178mm x 165mm</div>
<div class="c" style="left:535px;top:415px;width:166px;height:23px;padding:5px 0 0 3px;letter-spacing:-0.2px;">Gloss Art Card 310gsm</div>
<div class="c" style="left:702px;top:415px;width:166px;height:23px;padding:5px 0 0 3px;letter-spacing:0px;">4C (Both)</div>
<div class="c" style="left:869px;top:415px;width:166px;height:23px;padding:5px 4px 0 0;text-align:right;letter-spacing:0px;">250</div>
<div class="c" style="left:1036px;top:415px;width:166px;height:23px;padding:5px 0 0 3px;letter-spacing:0.2px;">Gloss Lamination (Both)</div>
<div class="c" style="left:1203px;top:415px;width:166px;height:23px;padding:5px 0 0 3px;letter-spacing:0.1px;">Die-Cutting, Fan Handle</div>
<div class="c" style="left:1370px;top:415px;width:166px;height:23px;padding:5px 4px 0 0;text-align:right;letter-spacing:0px;">254.21</div>
<div class="c" style="left:1537px;top:415px;width:166px;height:23px;padding:5px 4px 0 0;text-align:right;letter-spacing:0px;">304.21</div>
<div class="c" style="left:34px;top:439px;width:166px;height:23px;padding:5px 0 0 3px;letter-spacing:-0.3px;">Hand Fan</div>
<div class="c" style="left:201px;top:439px;width:166px;height:23px;padding:5px 0 0 3px;letter-spacing:-0.2px;"><span style="letter-spacing:-0.6px">PFS 001</span></div>
<div class="c" style="left:368px;top:439px;width:166px;height:23px;padding:5px 0 0 3px;letter-spacing:0px;">178mm x 165mm</div>
<div class="c" style="left:535px;top:439px;width:166px;height:23px;padding:5px 0 0 3px;letter-spacing:-0.2px;">Gloss Art Card 310gsm</div>
<div class="c" style="left:702px;top:439px;width:166px;height:23px;padding:5px 0 0 3px;letter-spacing:0px;">4C (Both)</div>
<div class="c" style="left:869px;top:439px;width:166px;height:23px;padding:5px 4px 0 0;text-align:right;letter-spacing:0px;">300</div>
<div class="c" style="left:1036px;top:439px;width:166px;height:23px;padding:5px 0 0 3px;letter-spacing:0.2px;">Gloss Lamination (Both)</div>
<div class="c" style="left:1203px;top:439px;width:166px;height:23px;padding:5px 0 0 3px;letter-spacing:0.1px;">Die-Cutting, Fan Handle</div>
<div class="c" style="left:1370px;top:439px;width:166px;height:23px;padding:5px 4px 0 0;text-align:right;letter-spacing:0px;">290.18</div>
<div class="c" style="left:1537px;top:439px;width:166px;height:23px;padding:5px 4px 0 0;text-align:right;letter-spacing:0px;">350.18</div>
<div class="c" style="left:34px;top:463px;width:166px;height:23px;padding:5px 0 0 3px;letter-spacing:-0.3px;">Hand Fan</div>
<div class="c" style="left:201px;top:463px;width:166px;height:23px;padding:5px 0 0 3px;letter-spacing:-0.2px;"><span style="letter-spacing:-0.6px">PFS 001</span></div>
<div class="c" style="left:368px;top:463px;width:166px;height:23px;padding:5px 0 0 3px;letter-spacing:0px;">178mm x 165mm</div>
<div class="c" style="left:535px;top:463px;width:166px;height:23px;padding:5px 0 0 3px;letter-spacing:-0.2px;">Gloss Art Card 310gsm</div>
<div class="c" style="left:702px;top:463px;width:166px;height:23px;padding:5px 0 0 3px;letter-spacing:0px;">4C (Both)</div>
<div class="c" style="left:869px;top:463px;width:166px;height:23px;padding:5px 4px 0 0;text-align:right;letter-spacing:0px;">350</div>
<div class="c" style="left:1036px;top:463px;width:166px;height:23px;padding:5px 0 0 3px;letter-spacing:0.2px;">Gloss Lamination (Both)</div>
<div class="c" style="left:1203px;top:463px;width:166px;height:23px;padding:5px 0 0 3px;letter-spacing:0.1px;">Die-Cutting, Fan Handle</div>
<div class="c" style="left:1370px;top:463px;width:166px;height:23px;padding:5px 4px 0 0;text-align:right;letter-spacing:0px;">328.08</div>
<div class="c" style="left:1537px;top:463px;width:166px;height:23px;padding:5px 4px 0 0;text-align:right;letter-spacing:0px;">388.08</div>
<div class="c" style="left:34px;top:487px;width:166px;height:23px;padding:5px 0 0 3px;letter-spacing:-0.3px;">Hand Fan</div>
<div class="c" style="left:201px;top:487px;width:166px;height:23px;padding:5px 0 0 3px;letter-spacing:-0.2px;"><span style="letter-spacing:-0.6px">PFS 001</span></div>
<div class="c" style="left:368px;top:487px;width:166px;height:23px;padding:5px 0 0 3px;letter-spacing:0px;">178mm x 165mm</div>
<div class="c" style="left:535px;top:487px;width:166px;height:23px;padding:5px 0 0 3px;letter-spacing:-0.2px;">Gloss Art Card 310gsm</div>
<div class="c" style="left:702px;top:487px;width:166px;height:23px;padding:5px 0 0 3px;letter-spacing:0px;">4C (Both)</div>
<div class="c" style="left:869px;top:487px;width:166px;height:23px;padding:5px 4px 0 0;text-align:right;letter-spacing:0px;">400</div>
<div class="c" style="left:1036px;top:487px;width:166px;height:23px;padding:5px 0 0 3px;letter-spacing:0.2px;">Gloss Lamination (Both)</div>
<div class="c" style="left:1203px;top:487px;width:166px;height:23px;padding:5px 0 0 3px;letter-spacing:0.1px;">Die-Cutting, Fan Handle</div>
<div class="c" style="left:1370px;top:487px;width:166px;height:23px;padding:5px 4px 0 0;text-align:right;letter-spacing:0px;">366.03</div>
<div class="c" style="left:1537px;top:487px;width:166px;height:23px;padding:5px 4px 0 0;text-align:right;letter-spacing:0px;">436.03</div>
<div class="c" style="left:34px;top:511px;width:166px;height:23px;padding:5px 0 0 3px;letter-spacing:-0.3px;">Hand Fan</div>
<div class="c" style="left:201px;top:511px;width:166px;height:23px;padding:5px 0 0 3px;letter-spacing:-0.2px;"><span style="letter-spacing:-0.6px">PFS 001</span></div>
<div class="c" style="left:368px;top:511px;width:166px;height:23px;padding:5px 0 0 3px;letter-spacing:0px;">178mm x 165mm</div>
<div class="c" style="left:535px;top:511px;width:166px;height:23px;padding:5px 0 0 3px;letter-spacing:-0.2px;">Gloss Art Card 310gsm</div>
<div class="c" style="left:702px;top:511px;width:166px;height:23px;padding:5px 0 0 3px;letter-spacing:0px;">4C (Both)</div>
<div class="c" style="left:869px;top:511px;width:166px;height:23px;padding:5px 4px 0 0;text-align:right;letter-spacing:0px;">450</div>
<div class="c" style="left:1036px;top:511px;width:166px;height:23px;padding:5px 0 0 3px;letter-spacing:0.2px;">Gloss Lamination (Both)</div>
<div class="c" style="left:1203px;top:511px;width:166px;height:23px;padding:5px 0 0 3px;letter-spacing:0.1px;">Die-Cutting, Fan Handle</div>
<div class="c" style="left:1370px;top:511px;width:166px;height:23px;padding:5px 4px 0 0;text-align:right;letter-spacing:0px;">401.94</div>
<div class="c" style="left:1537px;top:511px;width:166px;height:23px;padding:5px 4px 0 0;text-align:right;letter-spacing:0px;">471.94</div>
<div class="c" style="left:34px;top:535px;width:166px;height:23px;padding:5px 0 0 3px;letter-spacing:-0.3px;">Hand Fan</div>
<div class="c" style="left:201px;top:535px;width:166px;height:23px;padding:5px 0 0 3px;letter-spacing:-0.2px;"><span style="letter-spacing:-0.6px">PFS 001</span></div>
<div class="c" style="left:368px;top:535px;width:166px;height:23px;padding:5px 0 0 3px;letter-spacing:0px;">178mm x 165mm</div>
<div class="c" style="left:535px;top:535px;width:166px;height:23px;padding:5px 0 0 3px;letter-spacing:-0.2px;">Gloss Art Card 310gsm</div>
<div class="c" style="left:702px;top:535px;width:166px;height:23px;padding:5px 0 0 3px;letter-spacing:0px;">4C (Both)</div>
<div class="c" style="left:869px;top:535px;width:166px;height:23px;padding:5px 4px 0 0;text-align:right;letter-spacing:0px;">500</div>
<div class="c" style="left:1036px;top:535px;width:166px;height:23px;padding:5px 0 0 3px;letter-spacing:0.2px;">Gloss Lamination (Both)</div>
<div class="c" style="left:1203px;top:535px;width:166px;height:23px;padding:5px 0 0 3px;letter-spacing:0.1px;">Die-Cutting, Fan Handle</div>
<div class="c" style="left:1370px;top:535px;width:166px;height:23px;padding:5px 4px 0 0;text-align:right;letter-spacing:0px;">437.91</div>
<div class="c" style="left:1537px;top:535px;width:166px;height:23px;padding:5px 4px 0 0;text-align:right;letter-spacing:0px;">517.91</div>
<div class="c" style="left:34px;top:559px;width:166px;height:23px;padding:5px 0 0 3px;letter-spacing:-0.3px;">Hand Fan</div>
<div class="c" style="left:201px;top:559px;width:166px;height:23px;padding:5px 0 0 3px;letter-spacing:-0.2px;"><span style="letter-spacing:-0.6px">PFS 001</span></div>
<div class="c" style="left:368px;top:559px;width:166px;height:23px;padding:5px 0 0 3px;letter-spacing:0px;">178mm x 165mm</div>
<div class="c" style="left:535px;top:559px;width:166px;height:23px;padding:5px 0 0 3px;letter-spacing:-0.2px;">Gloss Art Card 310gsm</div>
<div class="c" style="left:702px;top:559px;width:166px;height:23px;padding:5px 0 0 3px;letter-spacing:0px;">4C (Both)</div>
<div class="c" style="left:869px;top:559px;width:166px;height:23px;padding:5px 4px 0 0;text-align:right;letter-spacing:0px;">600</div>
<div class="c" style="left:1036px;top:559px;width:166px;height:23px;padding:5px 0 0 3px;letter-spacing:0.2px;">Gloss Lamination (Both)</div>
<div class="c" style="left:1203px;top:559px;width:166px;height:23px;padding:5px 0 0 3px;letter-spacing:0.1px;">Die-Cutting, Fan Handle</div>
<div class="c" style="left:1370px;top:559px;width:166px;height:23px;padding:5px 4px 0 0;text-align:right;letter-spacing:0px;">509.8</div>
<div class="c" style="left:1537px;top:559px;width:166px;height:23px;padding:5px 4px 0 0;text-align:right;letter-spacing:0px;">619.8</div>
<div class="c" style="left:34px;top:583px;width:166px;height:23px;padding:5px 0 0 3px;letter-spacing:-0.3px;">Hand Fan</div>
<div class="c" style="left:201px;top:583px;width:166px;height:23px;padding:5px 0 0 3px;letter-spacing:-0.2px;"><span style="letter-spacing:-0.6px">PFS 001</span></div>
<div class="c" style="left:368px;top:583px;width:166px;height:23px;padding:5px 0 0 3px;letter-spacing:0px;">178mm x 165mm</div>
<div class="c" style="left:535px;top:583px;width:166px;height:23px;padding:5px 0 0 3px;letter-spacing:-0.2px;">Gloss Art Card 310gsm</div>
<div class="c" style="left:702px;top:583px;width:166px;height:23px;padding:5px 0 0 3px;letter-spacing:0px;">4C (Both)</div>
<div class="c" style="left:869px;top:583px;width:166px;height:23px;padding:5px 4px 0 0;text-align:right;letter-spacing:0px;">700</div>
<div class="c" style="left:1036px;top:583px;width:166px;height:23px;padding:5px 0 0 3px;letter-spacing:0.2px;">Gloss Lamination (Both)</div>
<div class="c" style="left:1203px;top:583px;width:166px;height:23px;padding:5px 0 0 3px;letter-spacing:0.1px;">Die-Cutting, Fan Handle</div>
<div class="c" style="left:1370px;top:583px;width:166px;height:23px;padding:5px 4px 0 0;text-align:right;letter-spacing:0px;">585.64</div>
<div class="c" style="left:1537px;top:583px;width:166px;height:23px;padding:5px 4px 0 0;text-align:right;letter-spacing:0px;">705.64</div>
<div class="c" style="left:34px;top:607px;width:166px;height:23px;padding:5px 0 0 3px;letter-spacing:-0.3px;">Hand Fan</div>
<div class="c" style="left:201px;top:607px;width:166px;height:23px;padding:5px 0 0 3px;letter-spacing:-0.2px;"><span style="letter-spacing:-0.6px">PFS 001</span></div>
<div class="c" style="left:368px;top:607px;width:166px;height:23px;padding:5px 0 0 3px;letter-spacing:0px;">178mm x 165mm</div>
<div class="c" style="left:535px;top:607px;width:166px;height:23px;padding:5px 0 0 3px;letter-spacing:-0.2px;">Gloss Art Card 310gsm</div>
<div class="c" style="left:702px;top:607px;width:166px;height:23px;padding:5px 0 0 3px;letter-spacing:0px;">4C (Both)</div>
<div class="c" style="left:869px;top:607px;width:166px;height:23px;padding:5px 4px 0 0;text-align:right;letter-spacing:0px;">800</div>
<div class="c" style="left:1036px;top:607px;width:166px;height:23px;padding:5px 0 0 3px;letter-spacing:0.2px;">Gloss Lamination (Both)</div>
<div class="c" style="left:1203px;top:607px;width:166px;height:23px;padding:5px 0 0 3px;letter-spacing:0.1px;">Die-Cutting, Fan Handle</div>
<div class="c" style="left:1370px;top:607px;width:166px;height:23px;padding:5px 4px 0 0;text-align:right;letter-spacing:0px;">661.5</div>
<div class="c" style="left:1537px;top:607px;width:166px;height:23px;padding:5px 4px 0 0;text-align:right;letter-spacing:0px;">801.5</div>
<div class="c" style="left:34px;top:631px;width:166px;height:23px;padding:5px 0 0 3px;letter-spacing:-0.3px;">Hand Fan</div>
<div class="c" style="left:201px;top:631px;width:166px;height:23px;padding:5px 0 0 3px;letter-spacing:-0.2px;"><span style="letter-spacing:-0.6px">PFS 001</span></div>
<div class="c" style="left:368px;top:631px;width:166px;height:23px;padding:5px 0 0 3px;letter-spacing:0px;">178mm x 165mm</div>
<div class="c" style="left:535px;top:631px;width:166px;height:23px;padding:5px 0 0 3px;letter-spacing:-0.2px;">Gloss Art Card 310gsm</div>
<div class="c" style="left:702px;top:631px;width:166px;height:23px;padding:5px 0 0 3px;letter-spacing:0px;">4C (Both)</div>
<div class="c" style="left:869px;top:631px;width:166px;height:23px;padding:5px 4px 0 0;text-align:right;letter-spacing:0px;">900</div>
<div class="c" style="left:1036px;top:631px;width:166px;height:23px;padding:5px 0 0 3px;letter-spacing:0.2px;">Gloss Lamination (Both)</div>
<div class="c" style="left:1203px;top:631px;width:166px;height:23px;padding:5px 0 0 3px;letter-spacing:0.1px;">Die-Cutting, Fan Handle</div>
<div class="c" style="left:1370px;top:631px;width:166px;height:23px;padding:5px 4px 0 0;text-align:right;letter-spacing:0px;">737.3</div>
<div class="c" style="left:1537px;top:631px;width:166px;height:23px;padding:5px 4px 0 0;text-align:right;letter-spacing:0px;">897.3</div>
<div class="c" style="left:34px;top:655px;width:166px;height:23px;padding:5px 0 0 3px;letter-spacing:-0.3px;">Hand Fan</div>
<div class="c" style="left:201px;top:655px;width:166px;height:23px;padding:5px 0 0 3px;letter-spacing:-0.2px;"><span style="letter-spacing:-0.6px">PFS 001</span></div>
<div class="c" style="left:368px;top:655px;width:166px;height:23px;padding:5px 0 0 3px;letter-spacing:0px;">178mm x 165mm</div>
<div class="c" style="left:535px;top:655px;width:166px;height:23px;padding:5px 0 0 3px;letter-spacing:-0.2px;">Gloss Art Card 310gsm</div>
<div class="c" style="left:702px;top:655px;width:166px;height:23px;padding:5px 0 0 3px;letter-spacing:0px;">4C (Both)</div>
<div class="c" style="left:869px;top:655px;width:166px;height:23px;padding:5px 4px 0 0;text-align:right;letter-spacing:0px;">1000</div>
<div class="c" style="left:1036px;top:655px;width:166px;height:23px;padding:5px 0 0 3px;letter-spacing:0.2px;">Gloss Lamination (Both)</div>
<div class="c" style="left:1203px;top:655px;width:166px;height:23px;padding:5px 0 0 3px;letter-spacing:0.1px;">Die-Cutting, Fan Handle</div>
<div class="c" style="left:1370px;top:655px;width:166px;height:23px;padding:5px 4px 0 0;text-align:right;letter-spacing:0px;">813.1</div>
<div class="c" style="left:1537px;top:655px;width:166px;height:23px;padding:5px 4px 0 0;text-align:right;letter-spacing:0px;">993.1</div>
<div class="c" style="left:34px;top:679px;width:166px;height:23px;padding:5px 0 0 3px;letter-spacing:-0.3px;">Hand Fan</div>
<div class="c" style="left:201px;top:679px;width:166px;height:23px;padding:5px 0 0 3px;letter-spacing:-0.2px;"><span style="letter-spacing:-0.6px">PFS 001</span></div>
<div class="c" style="left:368px;top:679px;width:166px;height:23px;padding:5px 0 0 3px;letter-spacing:0px;">178mm x 165mm</div>
<div class="c" style="left:535px;top:679px;width:166px;height:23px;padding:5px 0 0 3px;letter-spacing:-0.2px;">Gloss Art Card 310gsm</div>
<div class="c" style="left:702px;top:679px;width:166px;height:23px;padding:5px 0 0 3px;letter-spacing:0px;">4C (Both)</div>
<div class="c" style="left:869px;top:679px;width:166px;height:23px;padding:5px 4px 0 0;text-align:right;letter-spacing:0px;">1500</div>
<div class="c" style="left:1036px;top:679px;width:166px;height:23px;padding:5px 0 0 3px;letter-spacing:0.2px;">Gloss Lamination (Both)</div>
<div class="c" style="left:1203px;top:679px;width:166px;height:23px;padding:5px 0 0 3px;letter-spacing:0.1px;">Die-Cutting, Fan Handle</div>
<div class="c" style="left:1370px;top:679px;width:166px;height:23px;padding:5px 4px 0 0;text-align:right;letter-spacing:0px;">1189.6</div>
<div class="c" style="left:1537px;top:679px;width:166px;height:23px;padding:5px 4px 0 0;text-align:right;letter-spacing:0px;">1469.6</div>
<div class="c" style="left:34px;top:703px;width:166px;height:23px;padding:5px 0 0 3px;letter-spacing:-0.3px;">Hand Fan</div>
<div class="c" style="left:201px;top:703px;width:166px;height:23px;padding:5px 0 0 3px;letter-spacing:-0.2px;"><span style="letter-spacing:-0.6px">PFS 001</span></div>
<div class="c" style="left:368px;top:703px;width:166px;height:23px;padding:5px 0 0 3px;letter-spacing:0px;">178mm x 165mm</div>
<div class="c" style="left:535px;top:703px;width:166px;height:23px;padding:5px 0 0 3px;letter-spacing:-0.2px;">Gloss Art Card 310gsm</div>
<div class="c" style="left:702px;top:703px;width:166px;height:23px;padding:5px 0 0 3px;letter-spacing:0px;">4C (Both)</div>
<div class="c" style="left:869px;top:703px;width:166px;height:23px;padding:5px 4px 0 0;text-align:right;letter-spacing:0px;">2000</div>
<div class="c" style="left:1036px;top:703px;width:166px;height:23px;padding:5px 0 0 3px;letter-spacing:0.2px;">Gloss Lamination (Both)</div>
<div class="c" style="left:1203px;top:703px;width:166px;height:23px;padding:5px 0 0 3px;letter-spacing:0.1px;">Die-Cutting, Fan Handle</div>
<div class="c" style="left:1370px;top:703px;width:166px;height:23px;padding:5px 4px 0 0;text-align:right;letter-spacing:0px;">1565.5</div>
<div class="c" style="left:1537px;top:703px;width:166px;height:23px;padding:5px 4px 0 0;text-align:right;letter-spacing:0px;">1945.5</div>
<div class="c" style="left:34px;top:727px;width:166px;height:23px;padding:5px 0 0 3px;letter-spacing:-0.3px;">Hand Fan</div>
<div class="c" style="left:201px;top:727px;width:166px;height:23px;padding:5px 0 0 3px;letter-spacing:-0.2px;"><span style="letter-spacing:-0.6px">PFS 001</span></div>
<div class="c" style="left:368px;top:727px;width:166px;height:23px;padding:5px 0 0 3px;letter-spacing:0px;">178mm x 165mm</div>
<div class="c" style="left:535px;top:727px;width:166px;height:23px;padding:5px 0 0 3px;letter-spacing:-0.2px;">Gloss Art Card 310gsm</div>
<div class="c" style="left:702px;top:727px;width:166px;height:23px;padding:5px 0 0 3px;letter-spacing:0px;">4C (Both)</div>
<div class="c" style="left:869px;top:727px;width:166px;height:23px;padding:5px 4px 0 0;text-align:right;letter-spacing:0px;">2500</div>
<div class="c" style="left:1036px;top:727px;width:166px;height:23px;padding:5px 0 0 3px;letter-spacing:0.2px;">Gloss Lamination (Both)</div>
<div class="c" style="left:1203px;top:727px;width:166px;height:23px;padding:5px 0 0 3px;letter-spacing:0.1px;">Die-Cutting, Fan Handle</div>
<div class="c" style="left:1370px;top:727px;width:166px;height:23px;padding:5px 4px 0 0;text-align:right;letter-spacing:0px;">1941.4</div>
<div class="c" style="left:1537px;top:727px;width:166px;height:23px;padding:5px 4px 0 0;text-align:right;letter-spacing:0px;">2421.4</div>
<div class="c" style="left:34px;top:751px;width:166px;height:23px;padding:5px 0 0 3px;letter-spacing:-0.3px;">Hand Fan</div>
<div class="c" style="left:201px;top:751px;width:166px;height:23px;padding:5px 0 0 3px;letter-spacing:-0.2px;"><span style="letter-spacing:-0.6px">PFS 001</span></div>
<div class="c" style="left:368px;top:751px;width:166px;height:23px;padding:5px 0 0 3px;letter-spacing:0px;">178mm x 165mm</div>
<div class="c" style="left:535px;top:751px;width:166px;height:23px;padding:5px 0 0 3px;letter-spacing:-0.2px;">Gloss Art Card 310gsm</div>
<div class="c" style="left:702px;top:751px;width:166px;height:23px;padding:5px 0 0 3px;letter-spacing:0px;">4C (Both)</div>
<div class="c" style="left:869px;top:751px;width:166px;height:23px;padding:5px 4px 0 0;text-align:right;letter-spacing:0px;">3000</div>
<div class="c" style="left:1036px;top:751px;width:166px;height:23px;padding:5px 0 0 3px;letter-spacing:0.2px;">Gloss Lamination (Both)</div>
<div class="c" style="left:1203px;top:751px;width:166px;height:23px;padding:5px 0 0 3px;letter-spacing:0.1px;">Die-Cutting, Fan Handle</div>
<div class="c" style="left:1370px;top:751px;width:166px;height:23px;padding:5px 4px 0 0;text-align:right;letter-spacing:0px;">2217.6</div>
<div class="c" style="left:1537px;top:751px;width:166px;height:23px;padding:5px 4px 0 0;text-align:right;letter-spacing:0px;">2797.6</div>
<div class="c" style="left:34px;top:775px;width:166px;height:23px;padding:5px 0 0 3px;letter-spacing:-0.3px;">Hand Fan</div>
<div class="c" style="left:201px;top:775px;width:166px;height:23px;padding:5px 0 0 3px;letter-spacing:-0.2px;"><span style="letter-spacing:-0.6px">PFS 001</span></div>
<div class="c" style="left:368px;top:775px;width:166px;height:23px;padding:5px 0 0 3px;letter-spacing:0px;">178mm x 165mm</div>
<div class="c" style="left:535px;top:775px;width:166px;height:23px;padding:5px 0 0 3px;letter-spacing:-0.2px;">Gloss Art Card 310gsm</div>
<div class="c" style="left:702px;top:775px;width:166px;height:23px;padding:5px 0 0 3px;letter-spacing:0px;">4C (Both)</div>
<div class="c" style="left:869px;top:775px;width:166px;height:23px;padding:5px 4px 0 0;text-align:right;letter-spacing:0px;">3500</div>
<div class="c" style="left:1036px;top:775px;width:166px;height:23px;padding:5px 0 0 3px;letter-spacing:0.2px;">Gloss Lamination (Both)</div>
<div class="c" style="left:1203px;top:775px;width:166px;height:23px;padding:5px 0 0 3px;letter-spacing:0.1px;">Die-Cutting, Fan Handle</div>
<div class="c" style="left:1370px;top:775px;width:166px;height:23px;padding:5px 4px 0 0;text-align:right;letter-spacing:0px;">2593.4</div>
<div class="c" style="left:1537px;top:775px;width:166px;height:23px;padding:5px 4px 0 0;text-align:right;letter-spacing:0px;">3273.4</div>
<div class="c" style="left:34px;top:799px;width:166px;height:23px;padding:5px 0 0 3px;letter-spacing:-0.3px;">Hand Fan</div>
<div class="c" style="left:201px;top:799px;width:166px;height:23px;padding:5px 0 0 3px;letter-spacing:-0.2px;"><span style="letter-spacing:-0.6px">PFS 001</span></div>
<div class="c" style="left:368px;top:799px;width:166px;height:23px;padding:5px 0 0 3px;letter-spacing:0px;">178mm x 165mm</div>
<div class="c" style="left:535px;top:799px;width:166px;height:23px;padding:5px 0 0 3px;letter-spacing:-0.2px;">Gloss Art Card 310gsm</div>
<div class="c" style="left:702px;top:799px;width:166px;height:23px;padding:5px 0 0 3px;letter-spacing:0px;">4C (Both)</div>
<div class="c" style="left:869px;top:799px;width:166px;height:23px;padding:5px 4px 0 0;text-align:right;letter-spacing:0px;">4000</div>
<div class="c" style="left:1036px;top:799px;width:166px;height:23px;padding:5px 0 0 3px;letter-spacing:0.2px;">Gloss Lamination (Both)</div>
<div class="c" style="left:1203px;top:799px;width:166px;height:23px;padding:5px 0 0 3px;letter-spacing:0.1px;">Die-Cutting, Fan Handle</div>
<div class="c" style="left:1370px;top:799px;width:166px;height:23px;padding:5px 4px 0 0;text-align:right;letter-spacing:0px;">2769.2</div>
<div class="c" style="left:1537px;top:799px;width:166px;height:23px;padding:5px 4px 0 0;text-align:right;letter-spacing:0px;">3549.2</div>
<div class="c" style="left:34px;top:823px;width:166px;height:23px;padding:5px 0 0 3px;letter-spacing:-0.3px;">Hand Fan</div>
<div class="c" style="left:201px;top:823px;width:166px;height:23px;padding:5px 0 0 3px;letter-spacing:-0.2px;"><span style="letter-spacing:-0.6px">PFS 001</span></div>
<div class="c" style="left:368px;top:823px;width:166px;height:23px;padding:5px 0 0 3px;letter-spacing:0px;">178mm x 165mm</div>
<div class="c" style="left:535px;top:823px;width:166px;height:23px;padding:5px 0 0 3px;letter-spacing:-0.2px;">Gloss Art Card 310gsm</div>
<div class="c" style="left:702px;top:823px;width:166px;height:23px;padding:5px 0 0 3px;letter-spacing:0px;">4C (Both)</div>
<div class="c" style="left:869px;top:823px;width:166px;height:23px;padding:5px 4px 0 0;text-align:right;letter-spacing:0px;">4500</div>
<div class="c" style="left:1036px;top:823px;width:166px;height:23px;padding:5px 0 0 3px;letter-spacing:0.2px;">Gloss Lamination (Both)</div>
<div class="c" style="left:1203px;top:823px;width:166px;height:23px;padding:5px 0 0 3px;letter-spacing:0.1px;">Die-Cutting, Fan Handle</div>
<div class="c" style="left:1370px;top:823px;width:166px;height:23px;padding:5px 4px 0 0;text-align:right;letter-spacing:0px;">2962.8</div>
<div class="c" style="left:1537px;top:823px;width:166px;height:23px;padding:5px 4px 0 0;text-align:right;letter-spacing:0px;">3742.8</div>
<div class="c" style="left:34px;top:847px;width:166px;height:23px;padding:5px 0 0 3px;letter-spacing:-0.3px;">Hand Fan</div>
<div class="c" style="left:201px;top:847px;width:166px;height:23px;padding:5px 0 0 3px;letter-spacing:-0.2px;"><span style="letter-spacing:-0.6px">PFS 001</span></div>
<div class="c" style="left:368px;top:847px;width:166px;height:23px;padding:5px 0 0 3px;letter-spacing:0px;">178mm x 165mm</div>
<div class="c" style="left:535px;top:847px;width:166px;height:23px;padding:5px 0 0 3px;letter-spacing:-0.2px;">Gloss Art Card 310gsm</div>
<div class="c" style="left:702px;top:847px;width:166px;height:23px;padding:5px 0 0 3px;letter-spacing:0px;">4C (Both)</div>
<div class="c" style="left:869px;top:847px;width:166px;height:23px;padding:5px 4px 0 0;text-align:right;letter-spacing:0px;">5000</div>
<div class="c" style="left:1036px;top:847px;width:166px;height:23px;padding:5px 0 0 3px;letter-spacing:0.2px;">Gloss Lamination (Both)</div>
<div class="c" style="left:1203px;top:847px;width:166px;height:23px;padding:5px 0 0 3px;letter-spacing:0.1px;">Die-Cutting, Fan Handle</div>
<div class="c" style="left:1370px;top:847px;width:166px;height:23px;padding:5px 4px 0 0;text-align:right;letter-spacing:0px;">3151.5</div>
<div class="c" style="left:1537px;top:847px;width:166px;height:23px;padding:5px 4px 0 0;text-align:right;letter-spacing:0px;">4001.5</div>
<div class="c" style="left:34px;top:871px;width:166px;height:23px;padding:5px 0 0 3px;letter-spacing:-0.3px;">Hand Fan</div>
<div class="c" style="left:201px;top:871px;width:166px;height:23px;padding:5px 0 0 3px;letter-spacing:-0.2px;"><span style="letter-spacing:-0.6px">PFS 001</span></div>
<div class="c" style="left:368px;top:871px;width:166px;height:23px;padding:5px 0 0 3px;letter-spacing:0px;">178mm x 165mm</div>
<div class="c" style="left:535px;top:871px;width:166px;height:23px;padding:5px 0 0 3px;letter-spacing:-0.2px;">Gloss Art Card 310gsm</div>
<div class="c" style="left:702px;top:871px;width:166px;height:23px;padding:5px 0 0 3px;letter-spacing:0px;">4C (Both)</div>
<div class="c" style="left:869px;top:871px;width:166px;height:23px;padding:5px 4px 0 0;text-align:right;letter-spacing:0px;">6000</div>
<div class="c" style="left:1036px;top:871px;width:166px;height:23px;padding:5px 0 0 3px;letter-spacing:0.2px;">Gloss Lamination (Both)</div>
<div class="c" style="left:1203px;top:871px;width:166px;height:23px;padding:5px 0 0 3px;letter-spacing:0.1px;">Die-Cutting, Fan Handle</div>
<div class="c" style="left:1370px;top:871px;width:166px;height:23px;padding:5px 4px 0 0;text-align:right;letter-spacing:0px;">2645.6</div>
<div class="c" style="left:1537px;top:871px;width:166px;height:23px;padding:5px 4px 0 0;text-align:right;letter-spacing:0px;">3725.6</div>
<div class="c" style="left:34px;top:895px;width:166px;height:23px;padding:5px 0 0 3px;letter-spacing:-0.3px;">Hand Fan</div>
<div class="c" style="left:201px;top:895px;width:166px;height:23px;padding:5px 0 0 3px;letter-spacing:-0.2px;"><span style="letter-spacing:-0.6px">PFS 001</span></div>
<div class="c" style="left:368px;top:895px;width:166px;height:23px;padding:5px 0 0 3px;letter-spacing:0px;">178mm x 165mm</div>
<div class="c" style="left:535px;top:895px;width:166px;height:23px;padding:5px 0 0 3px;letter-spacing:-0.2px;">Gloss Art Card 310gsm</div>
<div class="c" style="left:702px;top:895px;width:166px;height:23px;padding:5px 0 0 3px;letter-spacing:0px;">4C (Both)</div>
<div class="c" style="left:869px;top:895px;width:166px;height:23px;padding:5px 4px 0 0;text-align:right;letter-spacing:0px;">7000</div>
<div class="c" style="left:1036px;top:895px;width:166px;height:23px;padding:5px 0 0 3px;letter-spacing:0.2px;">Gloss Lamination (Both)</div>
<div class="c" style="left:1203px;top:895px;width:166px;height:23px;padding:5px 0 0 3px;letter-spacing:0.1px;">Die-Cutting, Fan Handle</div>
<div class="c" style="left:1370px;top:895px;width:166px;height:23px;padding:5px 4px 0 0;text-align:right;letter-spacing:0px;">3338.39</div>
<div class="c" style="left:1537px;top:895px;width:166px;height:23px;padding:5px 4px 0 0;text-align:right;letter-spacing:0px;">4408.39</div>
<div class="c" style="left:34px;top:919px;width:166px;height:23px;padding:5px 0 0 3px;letter-spacing:-0.3px;">Hand Fan</div>
<div class="c" style="left:201px;top:919px;width:166px;height:23px;padding:5px 0 0 3px;letter-spacing:-0.2px;"><span style="letter-spacing:-0.6px">PFS 001</span></div>
<div class="c" style="left:368px;top:919px;width:166px;height:23px;padding:5px 0 0 3px;letter-spacing:0px;">178mm x 165mm</div>
<div class="c" style="left:535px;top:919px;width:166px;height:23px;padding:5px 0 0 3px;letter-spacing:-0.2px;">Gloss Art Card 310gsm</div>
<div class="c" style="left:702px;top:919px;width:166px;height:23px;padding:5px 0 0 3px;letter-spacing:0px;">4C (Both)</div>
<div class="c" style="left:869px;top:919px;width:166px;height:23px;padding:5px 4px 0 0;text-align:right;letter-spacing:0px;">8000</div>
<div class="c" style="left:1036px;top:919px;width:166px;height:23px;padding:5px 0 0 3px;letter-spacing:0.2px;">Gloss Lamination (Both)</div>
<div class="c" style="left:1203px;top:919px;width:166px;height:23px;padding:5px 0 0 3px;letter-spacing:0.1px;">Die-Cutting, Fan Handle</div>
<div class="c" style="left:1370px;top:919px;width:166px;height:23px;padding:5px 4px 0 0;text-align:right;letter-spacing:0px;">3712.28</div>
<div class="c" style="left:1537px;top:919px;width:166px;height:23px;padding:5px 4px 0 0;text-align:right;letter-spacing:0px;">4932.28</div>
<div class="c" style="left:34px;top:943px;width:166px;height:23px;padding:5px 0 0 3px;letter-spacing:-0.3px;">Hand Fan</div>
<div class="c" style="left:201px;top:943px;width:166px;height:23px;padding:5px 0 0 3px;letter-spacing:-0.2px;"><span style="letter-spacing:-0.6px">PFS 001</span></div>
<div class="c" style="left:368px;top:943px;width:166px;height:23px;padding:5px 0 0 3px;letter-spacing:0px;">178mm x 165mm</div>
<div class="c" style="left:535px;top:943px;width:166px;height:23px;padding:5px 0 0 3px;letter-spacing:-0.2px;">Gloss Art Card 310gsm</div>
<div class="c" style="left:702px;top:943px;width:166px;height:23px;padding:5px 0 0 3px;letter-spacing:0px;">4C (Both)</div>
<div class="c" style="left:869px;top:943px;width:166px;height:23px;padding:5px 4px 0 0;text-align:right;letter-spacing:0px;">9000</div>
<div class="c" style="left:1036px;top:943px;width:166px;height:23px;padding:5px 0 0 3px;letter-spacing:0.2px;">Gloss Lamination (Both)</div>
<div class="c" style="left:1203px;top:943px;width:166px;height:23px;padding:5px 0 0 3px;letter-spacing:0.1px;">Die-Cutting, Fan Handle</div>
<div class="c" style="left:1370px;top:943px;width:166px;height:23px;padding:5px 4px 0 0;text-align:right;letter-spacing:0px;">4107.95</div>
<div class="c" style="left:1537px;top:943px;width:166px;height:23px;padding:5px 4px 0 0;text-align:right;letter-spacing:0px;">5477.95</div>
<div style="position:absolute;left:32px;top:269px;width:170px;height:27px;border:2px solid #217346;"></div>
<div style="position:absolute;left:198px;top:292px;width:6px;height:6px;background:#217346;border:1px solid #fff;"></div>
<div style="position:absolute;left:1895px;top:247px;width:25px;height:727px;background:#e6e6e6;"></div>
<div style="position:absolute;left:1898px;top:249px;width:19px;height:19px;background:#fff;border:1px solid #c6c6c6;"></div>
<svg style="position:absolute;left:1902px;top:255px;" width="10" height="6" viewBox="0 0 10 6"><path d="M1 5 L5 1 L9 5 Z" fill="#666"/></svg>
<div style="position:absolute;left:1898px;top:268px;width:19px;height:706px;background:#dadada;"></div>
<div style="position:absolute;left:1898px;top:269px;width:19px;height:43px;background:#fff;border:1px solid #ababab;"></div>
<div style="position:absolute;left:1898px;top:955px;width:19px;height:19px;background:#fff;border:1px solid #c6c6c6;"></div>
<svg style="position:absolute;left:1902px;top:962px;" width="10" height="6" viewBox="0 0 10 6"><path d="M1 1 L9 1 L5 5 Z" fill="#666"/></svg>
<div style="position:absolute;left:0px;top:974px;width:1920px;height:28px;background:#e6e6e6;"></div>
<div style="position:absolute;left:0px;top:1002px;width:1920px;height:1px;background:#d4d4d4;"></div>
<svg style="position:absolute;left:27px;top:982px;" width="8" height="12" viewBox="0 0 8 12"><path d="M6 1 L1 6 L6 11 Z" fill="#bdbdbd"/></svg>
<svg style="position:absolute;left:56px;top:982px;" width="8" height="12" viewBox="0 0 8 12"><path d="M1 1 L6 6 L1 11 Z" fill="#bdbdbd"/></svg>
<div style="position:absolute;left:103px;top:973px;width:48px;height:26px;background:#fff;border-left:1px solid #ababab;border-right:1px solid #ababab;"></div>
<div style="position:absolute;left:103px;top:997px;width:48px;height:2px;background:#217346;"></div>
<div style="position:absolute;left:-173px;width:600px;text-align:center;top:978px;font-size:15px;line-height:1;color:#217346;font-weight:bold;white-space:nowrap;">csv</div>
<svg style="position:absolute;left:183px;top:977px;" width="22" height="22" viewBox="0 0 22 22"><circle cx="11" cy="11" r="9.5" fill="none" stroke="#777" stroke-width="1.3"/><path d="M11 5.5 V16.5 M5.5 11 H16.5" stroke="#666" stroke-width="1.8"/></svg>
<div style="position:absolute;left:1149px;top:982px;width:3px;height:3px;background:#999;"></div>
<div style="position:absolute;left:1149px;top:987px;width:3px;height:3px;background:#999;"></div>
<div style="position:absolute;left:1149px;top:992px;width:3px;height:3px;background:#999;"></div>
<div style="position:absolute;left:1167px;top:978px;width:19px;height:19px;background:#fff;border:1px solid #c6c6c6;"></div>
<svg style="position:absolute;left:1172px;top:982px;" width="8" height="10" viewBox="0 0 8 10"><path d="M6 0.5 L1 5 L6 9.5 Z" fill="#666"/></svg>
<div style="position:absolute;left:1186px;top:978px;width:627px;height:19px;background:#fff;border:1px solid #ababab;"></div>
<div style="position:absolute;left:1813px;top:978px;width:64px;height:19px;background:#dadada;"></div>
<div style="position:absolute;left:1878px;top:978px;width:19px;height:19px;background:#fff;border:1px solid #c6c6c6;"></div>
<svg style="position:absolute;left:1883px;top:982px;" width="8" height="10" viewBox="0 0 8 10"><path d="M1 0.5 L6 5 L1 9.5 Z" fill="#666"/></svg>
<div style="position:absolute;left:0px;top:1003px;width:1920px;height:27px;background:#f3f3f3;"></div>
<div style="position:absolute;left:8.5px;top:1010px;font-size:13px;line-height:1;color:#444;font-weight:normal;white-space:nowrap;">Ready</div>
<div style="position:absolute;left:1584px;top:1003px;width:42px;height:27px;background:#c6c6c6;"></div>
<svg style="position:absolute;left:1597px;top:1008px;" width="17" height="17" viewBox="0 0 17 17"><path d="M0.5 0.5 H15.5 V15.5 H0.5 Z M5.5 0.5 V15.5 M10.5 0.5 V15.5 M0.5 5.5 H15.5 M0.5 10.5 H15.5" fill="none" stroke="#808080" stroke-width="1.2"/></svg>
<svg style="position:absolute;left:1637px;top:1008px;" width="18" height="17" viewBox="0 0 18 17"><rect x="0.5" y="0.5" width="16.5" height="15" fill="none" stroke="#808080"/><rect x="4.5" y="3.5" width="8.5" height="9" fill="none" stroke="#808080"/><path d="M6.5 6 H11 M6.5 8 H11 M6.5 10 H11" stroke="#808080"/></svg>
<svg style="position:absolute;left:1680px;top:1008px;" width="18" height="17" viewBox="0 0 18 17"><rect x="0.5" y="0.5" width="16.5" height="15" fill="none" stroke="#808080"/><path d="M0.5 8.5 H7.5 V0.5 M11.5 0.5 V6.5" fill="none" stroke="#808080"/></svg>
<div style="position:absolute;left:1715px;top:1014px;width:10px;height:2px;background:#777;"></div>
<div style="position:absolute;left:1729px;top:1015px;width:125px;height:1px;background:#999;"></div>
<div style="position:absolute;left:1789px;top:1009px;width:6px;height:14px;background:#777;"></div>
<svg style="position:absolute;left:1857px;top:1010px;" width="12" height="12" viewBox="0 0 12 12"><path d="M6 0 V12 M0 6 H12" stroke="#666" stroke-width="2"/></svg>
<div style="position:absolute;left:1881px;top:1010px;font-size:12.5px;line-height:1;color:#444;font-weight:normal;white-space:nowrap;">100%</div>
<div style="position:absolute;left:1px;top:293px;width:1727px;height:26px;border:3.5px solid #5b17e8;border-right:none;"></div>
<div style="position:absolute;left:866px;top:266.5px;width:174px;height:707px;border:4px solid #fa7420;"></div>
<div style="position:absolute;left:1366px;top:266.5px;width:342px;height:707px;border:4px solid #ff0000;"></div>
<div style="position:absolute;left:978px;top:243px;width:44px;height:42px;background:#fa7420;"></div>
<div style="position:absolute;left:700px;width:600px;text-align:center;top:245px;font-size:32px;line-height:1;color:#fff;font-weight:bold;white-space:nowrap;">a</div>
<div style="position:absolute;left:1478px;top:243px;width:44px;height:42px;background:#ff0000;"></div>
<div style="position:absolute;left:1200px;width:600px;text-align:center;top:247px;font-size:32px;line-height:1;color:#fff;font-weight:bold;white-space:nowrap;">b</div>
<div style="position:absolute;left:1727px;top:285px;width:44px;height:42px;background:#5b17e8;"></div>
<div style="position:absolute;left:1449px;width:600px;text-align:center;top:287px;font-size:32px;line-height:1;color:#fff;font-weight:bold;white-space:nowrap;">c</div>
<div style="position:absolute;left:494px;top:406px;width:466px;height:307px;border:6px solid #fa7420;overflow:hidden;background:#fff;">
<div style="position:absolute;left:0px;top:0px;width:454px;height:4px;background:#dcdcdc;"></div>
<div style="position:absolute;left:0px;top:4px;width:454px;height:29px;background:#fbfbfb;"></div>
<div style="position:absolute;left:0px;top:32px;width:454px;height:1px;background:#c8c8c8;"></div>
<div style="position:absolute;left:0px;top:33px;width:454px;height:35px;background:#e6e6e6;"></div>
<div style="position:absolute;left:0px;top:68px;width:454px;height:1px;background:#ababab;"></div>
<div style="position:absolute;left:0px;top:45px;width:68px;height:23px;background:#d2d2d2;"></div>
<div style="position:absolute;left:0px;top:66px;width:68px;height:2px;background:#217346;"></div>
<div style="position:absolute;left:68px;top:45px;width:1px;height:23px;background:#c0c0c0;"></div>
<div style="position:absolute;left:68px;top:69px;width:1px;height:300px;background:#d4d4d4;"></div>
<div style="position:absolute;left:220px;top:45px;width:1px;height:23px;background:#c0c0c0;"></div>
<div style="position:absolute;left:220px;top:69px;width:1px;height:300px;background:#d4d4d4;"></div>
<div style="position:absolute;left:372px;top:45px;width:1px;height:23px;background:#c0c0c0;"></div>
<div style="position:absolute;left:372px;top:69px;width:1px;height:300px;background:#d4d4d4;"></div>
<div style="position:absolute;left:0px;top:92px;width:454px;height:1px;background:#d4d4d4;"></div>
<div style="position:absolute;left:0px;top:116px;width:454px;height:1px;background:#d4d4d4;"></div>
<div style="position:absolute;left:0px;top:140px;width:454px;height:1px;background:#d4d4d4;"></div>
<div style="position:absolute;left:0px;top:164px;width:454px;height:1px;background:#d4d4d4;"></div>
<div style="position:absolute;left:0px;top:188px;width:454px;height:1px;background:#d4d4d4;"></div>
<div style="position:absolute;left:0px;top:212px;width:454px;height:1px;background:#d4d4d4;"></div>
<div style="position:absolute;left:0px;top:236px;width:454px;height:1px;background:#d4d4d4;"></div>
<div style="position:absolute;left:0px;top:260px;width:454px;height:1px;background:#d4d4d4;"></div>
<div style="position:absolute;left:0px;top:284px;width:454px;height:1px;background:#d4d4d4;"></div>
<div style="position:absolute;left:0px;top:308px;width:454px;height:1px;background:#d4d4d4;"></div>
<div style="position:absolute;left:5px;top:51px;font-size:15px;line-height:1;color:#217346;white-space:nowrap;">H</div>
<div style="position:absolute;left:-6px;width:300px;text-align:center;top:51px;font-size:15px;line-height:1;color:#222;white-space:nowrap;">I</div>
<div style="position:absolute;left:146px;width:300px;text-align:center;top:51px;font-size:15px;line-height:1;color:#222;white-space:nowrap;">J</div>
<div style="position:absolute;left:445px;top:51px;font-size:15px;line-height:1;color:#222;white-space:nowrap;">K</div>
<div style="position:absolute;left:2px;top:73px;font-size:16px;line-height:1;color:#222;white-space:nowrap;">on</div>
<div style="position:absolute;left:72px;top:73px;font-size:16px;line-height:1;color:#222;white-space:nowrap;">Quantity</div>
<div style="position:absolute;left:224px;top:73px;font-size:16px;line-height:1;color:#222;white-space:nowrap;">Price</div>
<div style="position:absolute;left:-1px;top:97px;font-size:16px;line-height:1;color:#222;white-space:nowrap;">Malaysia</div>
<div style="position:absolute;left:-83px;width:300px;text-align:right;top:97px;font-size:16px;line-height:1;color:#222;white-space:nowrap;">50</div>
<div style="position:absolute;left:69px;width:300px;text-align:right;top:97px;font-size:16px;line-height:1;color:#222;white-space:nowrap;">113.14</div>
<div style="position:absolute;left:-1px;top:121px;font-size:16px;line-height:1;color:#222;white-space:nowrap;">Malaysia</div>
<div style="position:absolute;left:-83px;width:300px;text-align:right;top:121px;font-size:16px;line-height:1;color:#222;white-space:nowrap;">100</div>
<div style="position:absolute;left:69px;width:300px;text-align:right;top:121px;font-size:16px;line-height:1;color:#222;white-space:nowrap;">146.41</div>
<div style="position:absolute;left:-1px;top:145px;font-size:16px;line-height:1;color:#222;white-space:nowrap;">Malaysia</div>
<div style="position:absolute;left:-83px;width:300px;text-align:right;top:145px;font-size:16px;line-height:1;color:#222;white-space:nowrap;">150</div>
<div style="position:absolute;left:69px;width:300px;text-align:right;top:145px;font-size:16px;line-height:1;color:#222;white-space:nowrap;">182.33</div>
<div style="position:absolute;left:-1px;top:169px;font-size:16px;line-height:1;color:#222;white-space:nowrap;">Malaysia</div>
<div style="position:absolute;left:-83px;width:300px;text-align:right;top:169px;font-size:16px;line-height:1;color:#222;white-space:nowrap;">200</div>
<div style="position:absolute;left:69px;width:300px;text-align:right;top:169px;font-size:16px;line-height:1;color:#222;white-space:nowrap;">218.3</div>
<div style="position:absolute;left:-1px;top:193px;font-size:16px;line-height:1;color:#222;white-space:nowrap;">Malaysia</div>
<div style="position:absolute;left:-83px;width:300px;text-align:right;top:193px;font-size:16px;line-height:1;color:#222;white-space:nowrap;">250</div>
<div style="position:absolute;left:69px;width:300px;text-align:right;top:193px;font-size:16px;line-height:1;color:#222;white-space:nowrap;">254.21</div>
<div style="position:absolute;left:-1px;top:217px;font-size:16px;line-height:1;color:#222;white-space:nowrap;">Malaysia</div>
<div style="position:absolute;left:-83px;width:300px;text-align:right;top:217px;font-size:16px;line-height:1;color:#222;white-space:nowrap;">300</div>
<div style="position:absolute;left:69px;width:300px;text-align:right;top:217px;font-size:16px;line-height:1;color:#222;white-space:nowrap;">290.18</div>
<div style="position:absolute;left:-1px;top:241px;font-size:16px;line-height:1;color:#222;white-space:nowrap;">Malaysia</div>
<div style="position:absolute;left:-83px;width:300px;text-align:right;top:241px;font-size:16px;line-height:1;color:#222;white-space:nowrap;">350</div>
<div style="position:absolute;left:69px;width:300px;text-align:right;top:241px;font-size:16px;line-height:1;color:#222;white-space:nowrap;">328.08</div>
<div style="position:absolute;left:-1px;top:265px;font-size:16px;line-height:1;color:#222;white-space:nowrap;">Malaysia</div>
<div style="position:absolute;left:-83px;width:300px;text-align:right;top:265px;font-size:16px;line-height:1;color:#222;white-space:nowrap;">400</div>
<div style="position:absolute;left:69px;width:300px;text-align:right;top:265px;font-size:16px;line-height:1;color:#222;white-space:nowrap;">366.03</div>
<div style="position:absolute;left:-1px;top:289px;font-size:16px;line-height:1;color:#222;white-space:nowrap;">Malaysia</div>
<div style="position:absolute;left:-83px;width:300px;text-align:right;top:289px;font-size:16px;line-height:1;color:#222;white-space:nowrap;">450</div>
<div style="position:absolute;left:69px;width:300px;text-align:right;top:289px;font-size:16px;line-height:1;color:#222;white-space:nowrap;">401.94</div>
</div>
<div style="position:absolute;left:1410px;top:595px;width:466px;height:308px;border:6px solid #ff0000;overflow:hidden;background:#fff;">
<div style="position:absolute;left:0px;top:0px;width:454px;height:0px;background:#dcdcdc;"></div>
<div style="position:absolute;left:0px;top:0px;width:454px;height:17px;background:#fbfbfb;"></div>
<div style="position:absolute;left:0px;top:16px;width:454px;height:1px;background:#c8c8c8;"></div>
<div style="position:absolute;left:0px;top:17px;width:454px;height:35px;background:#e6e6e6;"></div>
<div style="position:absolute;left:0px;top:52px;width:454px;height:1px;background:#ababab;"></div>
<div style="position:absolute;left:0px;top:0px;width:454px;height:16px;background:#fbfbfb;"></div>
<div style="position:absolute;left:15px;top:29px;width:117px;height:23px;background:#d2d2d2;"></div>
<div style="position:absolute;left:15px;top:50px;width:117px;height:2px;background:#217346;"></div>
<div style="position:absolute;left:132px;top:29px;width:1px;height:23px;background:#c0c0c0;"></div>
<div style="position:absolute;left:283px;top:29px;width:1px;height:23px;background:#c0c0c0;"></div>
<div style="position:absolute;left:435px;top:29px;width:1px;height:23px;background:#c0c0c0;"></div>
<div style="position:absolute;left:15px;top:53px;width:1px;height:300px;background:#d4d4d4;"></div>
<div style="position:absolute;left:132px;top:53px;width:1px;height:300px;background:#d4d4d4;"></div>
<div style="position:absolute;left:283px;top:53px;width:1px;height:300px;background:#d4d4d4;"></div>
<div style="position:absolute;left:435px;top:53px;width:1px;height:300px;background:#d4d4d4;"></div>
<div style="position:absolute;left:0px;top:76px;width:454px;height:1px;background:#d4d4d4;"></div>
<div style="position:absolute;left:0px;top:100px;width:454px;height:1px;background:#d4d4d4;"></div>
<div style="position:absolute;left:0px;top:124px;width:454px;height:1px;background:#d4d4d4;"></div>
<div style="position:absolute;left:0px;top:148px;width:454px;height:1px;background:#d4d4d4;"></div>
<div style="position:absolute;left:0px;top:172px;width:454px;height:1px;background:#d4d4d4;"></div>
<div style="position:absolute;left:0px;top:196px;width:454px;height:1px;background:#d4d4d4;"></div>
<div style="position:absolute;left:0px;top:220px;width:454px;height:1px;background:#d4d4d4;"></div>
<div style="position:absolute;left:0px;top:244px;width:454px;height:1px;background:#d4d4d4;"></div>
<div style="position:absolute;left:0px;top:268px;width:454px;height:1px;background:#d4d4d4;"></div>
<div style="position:absolute;left:0px;top:292px;width:454px;height:1px;background:#d4d4d4;"></div>
<div style="position:absolute;left:0px;top:316px;width:454px;height:1px;background:#d4d4d4;"></div>
<div style="position:absolute;left:-76.5px;width:300px;text-align:center;top:35px;font-size:15px;line-height:1;color:#217346;white-space:nowrap;">H</div>
<div style="position:absolute;left:57.5px;width:300px;text-align:center;top:35px;font-size:15px;line-height:1;color:#222;white-space:nowrap;">I</div>
<div style="position:absolute;left:209px;width:300px;text-align:center;top:35px;font-size:15px;line-height:1;color:#222;white-space:nowrap;">J</div>
<div style="position:absolute;left:19.700000000000045px;top:58px;font-size:16px;line-height:1;color:#000;white-space:nowrap;">Location</div>
<div style="position:absolute;left:135.5px;top:58px;font-size:16px;line-height:1;color:#000;white-space:nowrap;">Quantity</div>
<div style="position:absolute;left:287.70000000000005px;top:58px;font-size:16px;line-height:1;color:#000;white-space:nowrap;">Price</div>
<div style="position:absolute;left:0px;top:82px;font-size:16px;line-height:1;color:#000;white-space:nowrap;">y</div>
<div style="position:absolute;left:19.700000000000045px;top:82px;font-size:16px;line-height:1;color:#000;white-space:nowrap;">West Malaysia</div>
<div style="position:absolute;left:-19.5px;width:300px;text-align:right;top:82px;font-size:16px;line-height:1;color:#000;white-space:nowrap;">50</div>
<div style="position:absolute;left:132px;width:300px;text-align:right;top:82px;font-size:16px;line-height:1;color:#000;white-space:nowrap;">113.14</div>
<div style="position:absolute;left:0px;top:106px;font-size:16px;line-height:1;color:#000;white-space:nowrap;">y</div>
<div style="position:absolute;left:19.700000000000045px;top:106px;font-size:16px;line-height:1;color:#000;white-space:nowrap;">West Malaysia</div>
<div style="position:absolute;left:-19.5px;width:300px;text-align:right;top:106px;font-size:16px;line-height:1;color:#000;white-space:nowrap;">100</div>
<div style="position:absolute;left:132px;width:300px;text-align:right;top:106px;font-size:16px;line-height:1;color:#000;white-space:nowrap;">146.41</div>
<div style="position:absolute;left:0px;top:130px;font-size:16px;line-height:1;color:#000;white-space:nowrap;">y</div>
<div style="position:absolute;left:19.700000000000045px;top:130px;font-size:16px;line-height:1;color:#000;white-space:nowrap;">West Malaysia</div>
<div style="position:absolute;left:-19.5px;width:300px;text-align:right;top:130px;font-size:16px;line-height:1;color:#000;white-space:nowrap;">150</div>
<div style="position:absolute;left:132px;width:300px;text-align:right;top:130px;font-size:16px;line-height:1;color:#000;white-space:nowrap;">182.33</div>
<div style="position:absolute;left:0px;top:154px;font-size:16px;line-height:1;color:#000;white-space:nowrap;">y</div>
<div style="position:absolute;left:19.700000000000045px;top:154px;font-size:16px;line-height:1;color:#000;white-space:nowrap;">West Malaysia</div>
<div style="position:absolute;left:-19.5px;width:300px;text-align:right;top:154px;font-size:16px;line-height:1;color:#000;white-space:nowrap;">200</div>
<div style="position:absolute;left:132px;width:300px;text-align:right;top:154px;font-size:16px;line-height:1;color:#000;white-space:nowrap;">218.3</div>
<div style="position:absolute;left:0px;top:178px;font-size:16px;line-height:1;color:#000;white-space:nowrap;">y</div>
<div style="position:absolute;left:19.700000000000045px;top:178px;font-size:16px;line-height:1;color:#000;white-space:nowrap;">West Malaysia</div>
<div style="position:absolute;left:-19.5px;width:300px;text-align:right;top:178px;font-size:16px;line-height:1;color:#000;white-space:nowrap;">250</div>
<div style="position:absolute;left:132px;width:300px;text-align:right;top:178px;font-size:16px;line-height:1;color:#000;white-space:nowrap;">254.21</div>
<div style="position:absolute;left:0px;top:202px;font-size:16px;line-height:1;color:#000;white-space:nowrap;">y</div>
<div style="position:absolute;left:19.700000000000045px;top:202px;font-size:16px;line-height:1;color:#000;white-space:nowrap;">West Malaysia</div>
<div style="position:absolute;left:-19.5px;width:300px;text-align:right;top:202px;font-size:16px;line-height:1;color:#000;white-space:nowrap;">300</div>
<div style="position:absolute;left:132px;width:300px;text-align:right;top:202px;font-size:16px;line-height:1;color:#000;white-space:nowrap;">290.18</div>
<div style="position:absolute;left:0px;top:226px;font-size:16px;line-height:1;color:#000;white-space:nowrap;">y</div>
<div style="position:absolute;left:19.700000000000045px;top:226px;font-size:16px;line-height:1;color:#000;white-space:nowrap;">West Malaysia</div>
<div style="position:absolute;left:-19.5px;width:300px;text-align:right;top:226px;font-size:16px;line-height:1;color:#000;white-space:nowrap;">350</div>
<div style="position:absolute;left:132px;width:300px;text-align:right;top:226px;font-size:16px;line-height:1;color:#000;white-space:nowrap;">328.08</div>
<div style="position:absolute;left:0px;top:250px;font-size:16px;line-height:1;color:#000;white-space:nowrap;">y</div>
<div style="position:absolute;left:19.700000000000045px;top:250px;font-size:16px;line-height:1;color:#000;white-space:nowrap;">West Malaysia</div>
<div style="position:absolute;left:-19.5px;width:300px;text-align:right;top:250px;font-size:16px;line-height:1;color:#000;white-space:nowrap;">400</div>
<div style="position:absolute;left:132px;width:300px;text-align:right;top:250px;font-size:16px;line-height:1;color:#000;white-space:nowrap;">366.03</div>
<div style="position:absolute;left:0px;top:274px;font-size:16px;line-height:1;color:#000;white-space:nowrap;">y</div>
<div style="position:absolute;left:19.700000000000045px;top:274px;font-size:16px;line-height:1;color:#000;white-space:nowrap;">West Malaysia</div>
<div style="position:absolute;left:-19.5px;width:300px;text-align:right;top:274px;font-size:16px;line-height:1;color:#000;white-space:nowrap;">450</div>
<div style="position:absolute;left:132px;width:300px;text-align:right;top:274px;font-size:16px;line-height:1;color:#000;white-space:nowrap;">401.94</div>
</div>
</body></html>
